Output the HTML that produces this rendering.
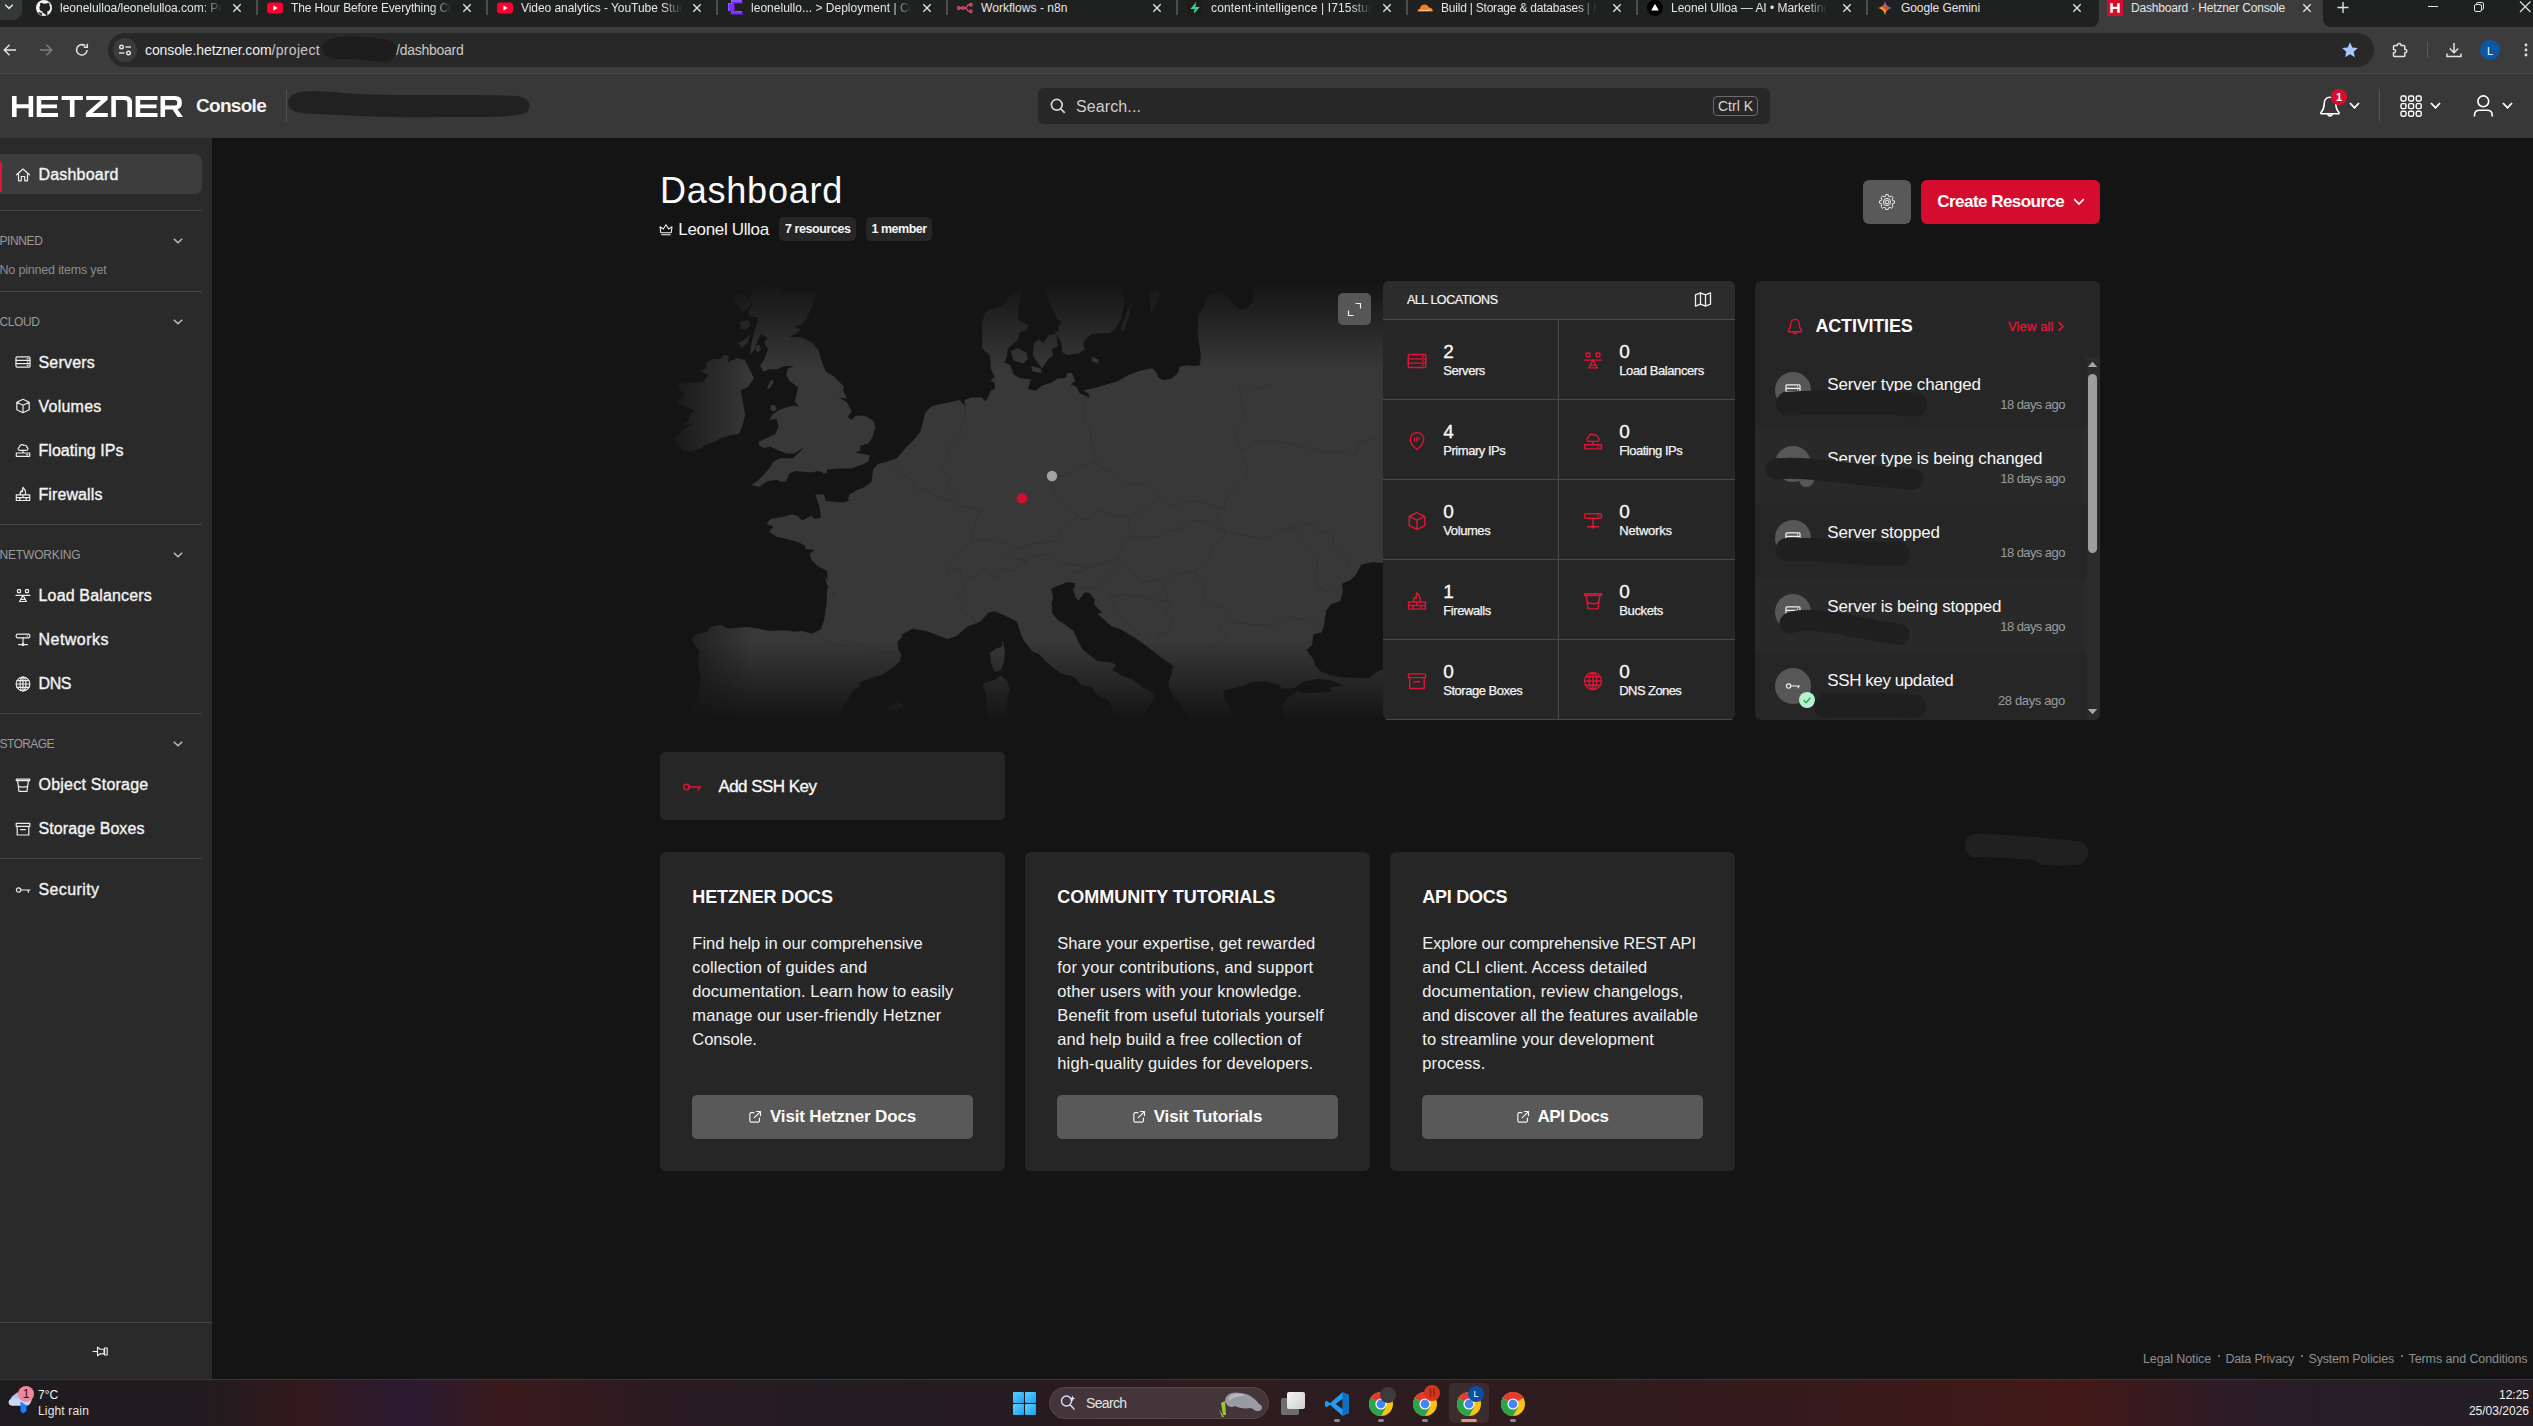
<!DOCTYPE html>
<html><head><meta charset="utf-8"><title>Dashboard · Hetzner Console</title>
<style>
html,body{margin:0;padding:0;}
body{width:2533px;height:1426px;overflow:hidden;position:relative;background:#141414;font-family:"Liberation Sans",sans-serif;}
#r{position:absolute;left:0;top:0;width:2533px;height:1426px;overflow:hidden;}
#r div,#r span,#r svg{position:absolute;}
#r span{display:block;}

</style></head><body><div id="r">
<div style="left:0px;top:0px;width:2533px;height:27px;background:#1f2020;border-radius:0px;"></div>
<div style="left:0px;top:0px;width:22px;height:20px;background:#363737;border-radius:0px;border-bottom-right-radius:9px;"></div>
<svg style="left:3px;top:2px" width="12" height="10" viewBox="0 0 12 10"><path d="M2.200 2.800L6 6.400L9.800 2.800" stroke="#e3e3e3" stroke-width="1.5" fill="none"/></svg>
<div style="left:2099px;top:0px;width:224px;height:27px;background:#3c3c3c;border-radius:0px;border-radius:0;"></div>
<div style="left:2091px;top:19px;width:8px;height:8px;background:#3c3c3c;border-radius:0px;"></div>
<div style="left:2091px;top:19px;width:8px;height:8px;background:#1f2020;border-radius:0px;border-bottom-right-radius:8px;"></div>
<div style="left:2323px;top:19px;width:8px;height:8px;background:#3c3c3c;border-radius:0px;"></div>
<div style="left:2323px;top:19px;width:8px;height:8px;background:#1f2020;border-radius:0px;border-bottom-left-radius:8px;"></div>
<svg style="left:36px;top:0px" width="16" height="16" viewBox="0 0 16 16"><circle cx="8" cy="8" r="8" fill="#f3f3f3"/><path d="M5.2 15.3c0-.6 0-1.3 0-2-1.8.4-2.5-.9-2.5-.9M10.8 15.4v-2.6c0-.8-.2-1.3-.6-1.6 1.9-.2 3.4-.9 3.4-3.6 0-.8-.3-1.5-.8-2 .1-.3.4-1.1-.1-2.1 0 0-.7-.2-2.1.8a7 7 0 0 0-3.6 0C5.600 3.300 4.900 3.500 4.900 3.500c-.5 1-.2 1.800-.1 2.100-.5.5-.8 1.200-.8 2 0 2.700 1.500 3.400 3.400 3.600-.3.300-.5.700-.6 1.300" fill="#1f2020" stroke="#1f2020" stroke-width="1.2"/></svg>
<span id="t0" style="font-size:12px;line-height:16px;color:#e6e6e6;top:-0.50px;white-space:pre;letter-spacing:-0.015px;left:60px;-webkit-mask-image:linear-gradient(90deg,#000 0,#000 86%,transparent 98%);mask-image:linear-gradient(90deg,#000 0,#000 86%,transparent 98%);">leonelulloa/leonelulloa.com: Pe</span>
<svg style="left:231px;top:1.5px" width="12" height="12" viewBox="-6 -6 12 12"><path d="M-3.7 -3.7L3.7 3.7M3.7 -3.7L-3.7 3.7" stroke="#e3e3e3" stroke-width="1.35" fill="none"/></svg>
<div style="left:256px;top:0px;width:1.5px;height:14.5px;background:#4d4d4d;border-radius:0px;"></div>
<svg style="left:267px;top:0px" width="16" height="16" viewBox="0 0 16 16"><rect x="0" y="2.5" width="16" height="11" rx="3" fill="#ff0033"/><path d="M6.400 5.600L10.600 8L6.400 10.400Z" fill="#fff"/></svg>
<span id="t1" style="font-size:12px;line-height:16px;color:#e6e6e6;top:-0.50px;white-space:pre;letter-spacing:-0.135px;left:291px;-webkit-mask-image:linear-gradient(90deg,#000 0,#000 86%,transparent 98%);mask-image:linear-gradient(90deg,#000 0,#000 86%,transparent 98%);">The Hour Before Everything Ch</span>
<svg style="left:461px;top:1.5px" width="12" height="12" viewBox="-6 -6 12 12"><path d="M-3.7 -3.7L3.7 3.7M3.7 -3.7L-3.7 3.7" stroke="#e3e3e3" stroke-width="1.35" fill="none"/></svg>
<div style="left:486px;top:0px;width:1.5px;height:14.5px;background:#4d4d4d;border-radius:0px;"></div>
<svg style="left:497px;top:0px" width="16" height="16" viewBox="0 0 16 16"><rect x="0" y="2.5" width="16" height="11" rx="3" fill="#ff0033"/><path d="M6.400 5.600L10.600 8L6.400 10.400Z" fill="#fff"/></svg>
<span id="t2" style="font-size:12px;line-height:16px;color:#e6e6e6;top:-0.50px;white-space:pre;letter-spacing:-0.054px;left:521px;-webkit-mask-image:linear-gradient(90deg,#000 0,#000 86%,transparent 98%);mask-image:linear-gradient(90deg,#000 0,#000 86%,transparent 98%);">Video analytics - YouTube Stud</span>
<svg style="left:691px;top:1.5px" width="12" height="12" viewBox="-6 -6 12 12"><path d="M-3.7 -3.7L3.7 3.7M3.7 -3.7L-3.7 3.7" stroke="#e3e3e3" stroke-width="1.35" fill="none"/></svg>
<div style="left:716px;top:0px;width:1.5px;height:14.5px;background:#4d4d4d;border-radius:0px;"></div>
<svg style="left:727px;top:0px" width="16" height="16" viewBox="0 0 16 16"><path d="M4 0H15V3H7V11H15V14H4V11H1V3H4Z" fill="#8c52ff"/><path d="M5 2H16V4H8V12H16V15H5V12H2V4H5Z" fill="#6b16ed" opacity=".55"/></svg>
<span id="t3" style="font-size:12px;line-height:16px;color:#e6e6e6;top:-0.50px;white-space:pre;letter-spacing:0.024px;left:751px;-webkit-mask-image:linear-gradient(90deg,#000 0,#000 86%,transparent 98%);mask-image:linear-gradient(90deg,#000 0,#000 86%,transparent 98%);">leonelullo... &gt; Deployment | Co</span>
<svg style="left:921px;top:1.5px" width="12" height="12" viewBox="-6 -6 12 12"><path d="M-3.7 -3.7L3.7 3.7M3.7 -3.7L-3.7 3.7" stroke="#e3e3e3" stroke-width="1.35" fill="none"/></svg>
<div style="left:946px;top:0px;width:1.5px;height:14.5px;background:#4d4d4d;border-radius:0px;"></div>
<svg style="left:957px;top:0px" width="16" height="16" viewBox="0 0 16 16" fill="none" stroke="#ea4b71" stroke-width="1.3"><circle cx="1.800" cy="8" r="1.300"/><circle cx="6" cy="8" r="1.300"/><circle cx="13.800" cy="4.800" r="1.300"/><circle cx="13.800" cy="11.200" r="1.300"/><path d="M3.100 8H4.700M7.300 8H8.500C10 8 9.800 4.800 11.300 4.800H12.500M8.500 8C10 8 9.800 11.200 11.300 11.200H12.500"/></svg>
<span id="t4" style="font-size:12px;line-height:16px;color:#e6e6e6;top:-0.50px;white-space:pre;letter-spacing:0.046px;left:981px;">Workflows - n8n</span>
<svg style="left:1151px;top:1.5px" width="12" height="12" viewBox="-6 -6 12 12"><path d="M-3.7 -3.7L3.7 3.7M3.7 -3.7L-3.7 3.7" stroke="#e3e3e3" stroke-width="1.35" fill="none"/></svg>
<div style="left:1176px;top:0px;width:1.5px;height:14.5px;background:#4d4d4d;border-radius:0px;"></div>
<svg style="left:1187px;top:0px" width="16" height="16" viewBox="0 0 16 16"><rect width="16" height="16" rx="2" fill="#1c1c1c"/><path d="M9.200 2L3.300 9H7.600L6.800 14L12.700 7H8.400Z" fill="#3ecf8e"/></svg>
<span id="t5" style="font-size:12px;line-height:16px;color:#e6e6e6;top:-0.50px;white-space:pre;letter-spacing:0.154px;left:1211px;-webkit-mask-image:linear-gradient(90deg,#000 0,#000 86%,transparent 98%);mask-image:linear-gradient(90deg,#000 0,#000 86%,transparent 98%);">content-intelligence | I715stud</span>
<svg style="left:1381px;top:1.5px" width="12" height="12" viewBox="-6 -6 12 12"><path d="M-3.7 -3.7L3.7 3.7M3.7 -3.7L-3.7 3.7" stroke="#e3e3e3" stroke-width="1.35" fill="none"/></svg>
<div style="left:1406px;top:0px;width:1.5px;height:14.5px;background:#4d4d4d;border-radius:0px;"></div>
<svg style="left:1417px;top:0px" width="16" height="16" viewBox="0 0 16 16"><path d="M0.500 11.500C0.300 9.800 1.500 8.700 2.900 8.700C3.100 6.300 5.200 4.500 7.500 4.500C9.600 4.500 11.200 5.800 11.800 7.600C14 7.500 15.800 9.200 15.800 11.500Z" fill="#f6821f"/><path d="M10.500 9.300L14.800 9.300L15.500 10.400L10.500 10.400Z" fill="#fbad41"/><path d="M3 10.200H11.500V10.900H3Z" fill="#fff" opacity=".85"/></svg>
<span id="t6" style="font-size:12px;line-height:16px;color:#e6e6e6;top:-0.50px;white-space:pre;letter-spacing:-0.215px;left:1441px;-webkit-mask-image:linear-gradient(90deg,#000 0,#000 86%,transparent 98%);mask-image:linear-gradient(90deg,#000 0,#000 86%,transparent 98%);">Build | Storage &amp; databases | F</span>
<svg style="left:1611px;top:1.5px" width="12" height="12" viewBox="-6 -6 12 12"><path d="M-3.7 -3.7L3.7 3.7M3.7 -3.7L-3.7 3.7" stroke="#e3e3e3" stroke-width="1.35" fill="none"/></svg>
<div style="left:1636px;top:0px;width:1.5px;height:14.5px;background:#4d4d4d;border-radius:0px;"></div>
<svg style="left:1647px;top:0px" width="16" height="16" viewBox="0 0 16 16"><circle cx="8" cy="8" r="8" fill="#000"/><path d="M8 3.800L11.800 10.600H4.200Z" fill="#fff"/></svg>
<span id="t7" style="font-size:12px;line-height:16px;color:#e6e6e6;top:-0.50px;white-space:pre;letter-spacing:-0.022px;left:1671px;-webkit-mask-image:linear-gradient(90deg,#000 0,#000 86%,transparent 98%);mask-image:linear-gradient(90deg,#000 0,#000 86%,transparent 98%);">Leonel Ulloa — AI • Marketing</span>
<svg style="left:1841px;top:1.5px" width="12" height="12" viewBox="-6 -6 12 12"><path d="M-3.7 -3.7L3.7 3.7M3.7 -3.7L-3.7 3.7" stroke="#e3e3e3" stroke-width="1.35" fill="none"/></svg>
<div style="left:1866px;top:0px;width:1.5px;height:14.5px;background:#4d4d4d;border-radius:0px;"></div>
<svg style="left:1877px;top:0px" width="16" height="16" viewBox="0 0 16 16"><defs><linearGradient id="gm" x1="0" y1="1" x2="1" y2="0"><stop offset="0" stop-color="#34a853"/><stop offset=".35" stop-color="#fbbc04"/><stop offset=".5" stop-color="#ea4335"/><stop offset=".75" stop-color="#4285f4"/><stop offset="1" stop-color="#4285f4"/></linearGradient></defs><path d="M8 0.500C8.400 4.800 11.200 7.600 15.500 8C11.200 8.400 8.400 11.200 8 15.500C7.600 11.200 4.800 8.400 0.500 8C4.800 7.600 7.600 4.800 8 0.500Z" fill="url(#gm)"/></svg>
<span id="t8" style="font-size:12px;line-height:16px;color:#e6e6e6;top:-0.50px;white-space:pre;letter-spacing:-0.081px;left:1901px;">Google Gemini</span>
<svg style="left:2071px;top:1.5px" width="12" height="12" viewBox="-6 -6 12 12"><path d="M-3.7 -3.7L3.7 3.7M3.7 -3.7L-3.7 3.7" stroke="#e3e3e3" stroke-width="1.35" fill="none"/></svg>
<svg style="left:2107px;top:0px" width="16" height="16" viewBox="0 0 16 16"><rect width="16" height="16" fill="#d50c2d"/><path d="M3.300 3.200H5.800V6.700H10.200V3.200H12.700V12.800H10.200V9.100H5.800V12.800H3.300Z" fill="#fff"/></svg>
<span id="t9" style="font-size:12px;line-height:16px;color:#e6e6e6;top:-0.50px;white-space:pre;letter-spacing:-0.176px;left:2131px;">Dashboard · Hetzner Console</span>
<svg style="left:2301px;top:1.5px" width="12" height="12" viewBox="-6 -6 12 12"><path d="M-3.7 -3.7L3.7 3.7M3.7 -3.7L-3.7 3.7" stroke="#e3e3e3" stroke-width="1.35" fill="none"/></svg>
<svg style="left:2337px;top:1px" width="12" height="13" viewBox="0 0 12 13"><path d="M6 1V12M0.500 6.500H11.500" stroke="#e3e3e3" stroke-width="1.4"/></svg>
<div style="left:2428px;top:6px;width:10px;height:1px;background:#e6e6e6;border-radius:0px;"></div>
<svg style="left:2473px;top:1px" width="12" height="12" viewBox="0 0 12 12" fill="none" stroke="#e6e6e6" stroke-width="1"><rect x="1.500" y="3.500" width="7" height="7" rx="1.500"/><path d="M3.500 3.500V2.800Q3.500 1.500 4.800 1.500H9.200Q10.500 1.500 10.500 2.800V7.200Q10.500 8.500 9.200 8.500H8.500"/></svg>
<svg style="left:2519px;top:1px" width="14" height="12" viewBox="0 0 14 12"><path d="M1 0.500L11.500 11M11.500 0.500L1 11" stroke="#e6e6e6" stroke-width="1.100" fill="none"/></svg>
<div style="left:0px;top:27px;width:2533px;height:47px;background:#3c3c3c;border-radius:0px;"></div>
<div style="left:0px;top:73px;width:2533px;height:1px;background:#474747;border-radius:0px;"></div>
<div style="left:108px;top:33px;width:2266px;height:34px;background:#282828;border-radius:17px;"></div>
<svg style="left:2px;top:42px" width="16" height="16" viewBox="0 0 16 16" fill="none" stroke="#e3e3e3" stroke-width="1.500"><path d="M14 8H2.500M7.500 2.800L2.300 8L7.500 13.200"/></svg>
<svg style="left:38px;top:42px" width="16" height="16" viewBox="0 0 16 16" fill="none" stroke="#7d7d7d" stroke-width="1.500"><path d="M2 8H13.500M8.500 2.800L13.700 8L8.500 13.200"/></svg>
<svg style="left:74px;top:42px" width="16" height="16" viewBox="0 0 16 16" fill="none" stroke="#e3e3e3" stroke-width="1.500"><path d="M13 8A5.200 5.200 0 1 1 11.200 3.900"/><path d="M13.300 1.800V5.300H9.800" /></svg>
<svg style="left:113px;top:38px" width="24" height="24" viewBox="0 0 24 24"><circle cx="12" cy="12" r="12" fill="#3b3b3b"/><g fill="none" stroke="#e3e3e3" stroke-width="1.400"><circle cx="8.500" cy="9" r="1.800"/><path d="M12.500 9H18"/><circle cx="15.500" cy="15" r="1.800"/><path d="M6 15H11.500"/></g></svg>
<span id="t10" style="font-size:14px;line-height:18px;color:#efefef;top:41.00px;white-space:pre;letter-spacing:-0.100px;left:145px;">console.hetzner.com</span>
<span id="t11" style="font-size:14px;line-height:18px;color:#c9c9c9;top:41.00px;white-space:pre;letter-spacing:0.322px;left:271.5px;">/project</span>
<span id="t12" style="font-size:14px;line-height:18px;color:#c9c9c9;top:41.00px;white-space:pre;letter-spacing:-0.256px;left:396px;">/dashboard</span>
<svg style="left:318px;top:34px" width="84" height="32" viewBox="0 0 84 32"><path d="M6 9C14 2 30 1 44 3C58 3 74 5 78 11C80 17 78 24 72 27C60 29 46 26 34 25C22 26 8 25 5 19C3 15 3 12 6 9Z" fill="#1d1d1d"/></svg>
<svg style="left:2341px;top:41px" width="18" height="18" viewBox="0 0 18 18"><path d="M9 1.300L11.300 6.500L16.900 7L12.700 10.700L13.900 16.200L9 13.300L4.100 16.200L5.300 10.700L1.100 7L6.700 6.500Z" fill="#a8c7fa"/></svg>
<svg style="left:2391px;top:41px" width="18" height="18" viewBox="0 0 18 18" fill="none" stroke="#e3e3e3" stroke-width="1.500" stroke-linejoin="round"><path d="M2.500 5.800Q2.500 4.600 3.700 4.600H6.400V4.200A1.800 1.800 0 0 1 10 4.200V4.600H12.600Q13.800 4.600 13.800 5.800V8.400H14.200A1.700 1.700 0 0 1 14.200 11.800H13.800V14.400Q13.800 15.600 12.600 15.600H3.700Q2.500 15.600 2.500 14.400V11.800H2.900A1.700 1.700 0 0 0 2.900 8.400H2.500Z"/></svg>
<div style="left:2427px;top:42px;width:1px;height:16px;background:#5a5a5a;border-radius:0px;"></div>
<svg style="left:2445px;top:41px" width="18" height="18" viewBox="0 0 18 18" fill="none" stroke="#e3e3e3" stroke-width="1.500"><path d="M9 2V11.500M4.800 7.500L9 11.700L13.200 7.500M2 12.500V15.500H16V12.500"/></svg>
<svg style="left:2480px;top:40px" width="20" height="20" viewBox="0 0 20 20"><circle cx="10" cy="10" r="10" fill="#0a57a8"/></svg>
<span id="t13" style="font-size:11px;line-height:14px;color:#ffffff;top:43.50px;white-space:pre;left:2490px;transform:translateX(-50%);">L</span>
<svg style="left:2524px;top:43px" width="4" height="4" viewBox="0 0 4 4"><circle cx="2" cy="2" r="1.400" fill="#e3e3e3"/></svg>
<svg style="left:2524px;top:48px" width="4" height="4" viewBox="0 0 4 4"><circle cx="2" cy="2" r="1.400" fill="#e3e3e3"/></svg>
<svg style="left:2524px;top:53px" width="4" height="4" viewBox="0 0 4 4"><circle cx="2" cy="2" r="1.400" fill="#e3e3e3"/></svg>
<div style="left:0px;top:74px;width:2533px;height:64px;background:#383838;border-radius:0px;"></div>
<svg style="left:12px;top:96px" width="171" height="21" viewBox="0 0 171 21" fill="#fff">
<path d="M0 0H4.600V8.200H16.600V0H21.200V21H16.600V12.200H4.600V21H0Z"/>
<path d="M24.700 0H46V4H29.300V8.400H45V12.200H29.300V17H46V21H24.700Z"/>
<path d="M49.600 0H70.900V4H62.500V21H57.900V4H49.600Z"/>
<path d="M74.200 0H95.600V3.800L80.500 17H95.800V21H73.900V17.200L89 4H74.200Z"/>
<path d="M99.300 21V0H113.500Q120 0 120 6.500V21H115.400V7.200Q115.400 4 112.200 4H103.900V21Z"/>
<path d="M123.600 0H145.500V4H128.200V8.400H144.500V12.200H128.200V17H145.500V21H123.600Z"/>
<path d="M148.500 0H163Q169.800 0 169.800 6V7.600Q169.800 12.400 165.500 13.200L171 21H165.600L160.600 13.500H153.100V21H148.500ZM153.100 4V9.600H162.600Q165.200 9.600 165.200 7.400V6.200Q165.200 4 162.600 4Z"/>
</svg>
<span id="t14" style="font-size:19px;line-height:24px;color:#f2f2f2;top:93.50px;white-space:pre;font-weight:700;letter-spacing:-0.708px;left:196px;">Console</span>
<div style="left:286px;top:90px;width:1px;height:32px;background:#525252;border-radius:0px;"></div>
<svg style="left:286px;top:88px" width="248" height="32" viewBox="0 0 248 32"><path d="M5 8C12 1 40 3 70 6C120 8 190 6 232 8C242 10 246 16 242 23C236 30 200 29 150 29C110 30 70 28 30 26C10 26 2 22 2 15C2 12 3 10 5 8Z" fill="#212121"/></svg>
<div style="left:1038px;top:88px;width:732px;height:36px;background:#272727;border-radius:6px;"></div>
<svg style="left:1049px;top:97px" width="18" height="18" viewBox="0 0 18 18" fill="none" stroke="#d4d4d4" stroke-width="1.700"><circle cx="7.800" cy="7.800" r="5.400"/><path d="M11.800 11.800L15.800 15.800"/></svg>
<span id="t15" style="font-size:16px;line-height:20px;color:#cfcfcf;top:97.00px;white-space:pre;letter-spacing:0.108px;left:1076px;">Search...</span>
<div style="left:1713px;top:96px;width:45px;height:20px;background:transparent;border-radius:4px;border:1px solid #6b6b6b;box-sizing:border-box;"></div>
<span id="t16" style="font-size:14px;line-height:18px;color:#d6d6d6;top:97.00px;white-space:pre;left:1735.5px;transform:translateX(-50%);">Ctrl K</span>
<svg style="left:2318px;top:95px" width="24" height="25" viewBox="0 0 24 25" fill="none" stroke="#fff" stroke-width="1.600" stroke-linejoin="round" stroke-linecap="round"><path d="M12 2.200C8 2.200 6.200 5.400 6.200 8.800C6.200 13 4.800 15.500 3 17.500C2.600 18.100 2.900 18.800 3.700 18.800H20.300C21.100 18.800 21.400 18.100 21 17.500C19.200 15.500 17.800 13 17.800 8.800C17.800 5.400 16 2.200 12 2.200Z"/><path d="M9.800 19.200A2.300 2.300 0 0 0 14.200 19.200"/></svg>
<svg style="left:2330px;top:88px" width="18" height="18" viewBox="0 0 18 18"><circle cx="9" cy="9" r="8.200" fill="#d50c2d"/></svg>
<span id="t17" style="font-size:11px;line-height:14px;color:#fff;top:90.30px;white-space:pre;font-weight:700;left:2339px;transform:translateX(-50%);">1</span>
<svg style="left:2349px;top:102px" width="11" height="7" viewBox="0 0 11 7"><path d="M1 1L5.5 5.8L10 1" stroke="#fff" stroke-width="1.8" fill="none"/></svg>
<svg style="left:2429.5px;top:102px" width="11" height="7" viewBox="0 0 11 7"><path d="M1 1L5.5 5.8L10 1" stroke="#fff" stroke-width="1.8" fill="none"/></svg>
<svg style="left:2501.5px;top:102px" width="11" height="7" viewBox="0 0 11 7"><path d="M1 1L5.5 5.8L10 1" stroke="#fff" stroke-width="1.8" fill="none"/></svg>
<div style="left:2379px;top:89px;width:1px;height:32px;background:#555;border-radius:0px;"></div>
<svg style="left:2400px;top:95px" width="23" height="23" viewBox="0 0 23 23" fill="none" stroke="#fff" stroke-width="1.400"><rect x="1.0" y="1.0" width="5" height="5" rx="1.400"/><rect x="1.0" y="8.6" width="5" height="5" rx="1.400"/><rect x="1.0" y="16.2" width="5" height="5" rx="1.400"/><rect x="8.6" y="1.0" width="5" height="5" rx="1.400"/><rect x="8.6" y="8.6" width="5" height="5" rx="1.400"/><rect x="8.6" y="16.2" width="5" height="5" rx="1.400"/><rect x="16.2" y="1.0" width="5" height="5" rx="1.400"/><rect x="16.2" y="8.6" width="5" height="5" rx="1.400"/><rect x="16.2" y="16.2" width="5" height="5" rx="1.400"/></svg>
<svg style="left:2472px;top:94px" width="23" height="24" viewBox="0 0 23 24" fill="none" stroke="#fff" stroke-width="1.600"><circle cx="11.300" cy="7.300" r="5.400"/><path d="M2.500 22.500V21Q2.500 16.200 7.500 16.200H15.200Q20.200 16.200 20.200 21V22.500"/></svg>
<div style="left:0px;top:138px;width:212px;height:1242px;background:#2a2a2a;border-radius:0px;"></div>
<div style="left:0px;top:154px;width:202px;height:40px;background:#3d3d3d;border-radius:0px;border-radius:0 7px 7px 0;"></div>
<div style="left:0px;top:162px;width:2px;height:30px;background:#e01535;border-radius:0px;"></div>
<div style="left:0px;top:210px;width:202px;height:1px;background:#454545;border-radius:0px;"></div>
<div style="left:0px;top:291px;width:202px;height:1px;background:#454545;border-radius:0px;"></div>
<div style="left:0px;top:524px;width:202px;height:1px;background:#454545;border-radius:0px;"></div>
<div style="left:0px;top:713px;width:202px;height:1px;background:#454545;border-radius:0px;"></div>
<div style="left:0px;top:858px;width:202px;height:1px;background:#454545;border-radius:0px;"></div>
<div style="left:0px;top:1322px;width:212px;height:1px;background:#454545;border-radius:0px;"></div>
<svg style="left:15px;top:166.5px" width="16" height="16" viewBox="0 0 16 16" fill="none" stroke="#ececec" stroke-width="1.200" stroke-linejoin="round" stroke-linecap="round"><path d="M1.500 7.800L8 2L14.500 7.800M3.500 6.500V13.800H6.300V9.500H9.700V13.800H12.500V6.500"/></svg>
<span id="t18" style="font-size:16px;line-height:22px;color:#f4f4f4;top:164.30px;white-space:pre;-webkit-text-stroke:0.35px #f4f4f4;letter-spacing:0.191px;left:38.5px;">Dashboard</span>
<svg style="left:15px;top:354px" width="16" height="16" viewBox="0 0 16 16" fill="none" stroke="#ececec" stroke-width="1.200" stroke-linejoin="round" stroke-linecap="round"><rect x="1" y="2.800" width="14" height="10.400" rx="1"/><path d="M1 6.300H15M1 9.700H15M12.300 4.600H13M12.300 8H13M12.300 11.400H13"/></svg>
<span id="t19" style="font-size:16px;line-height:22px;color:#f4f4f4;top:351.80px;white-space:pre;-webkit-text-stroke:0.35px #f4f4f4;letter-spacing:0.196px;left:38.5px;">Servers</span>
<svg style="left:15px;top:398px" width="16" height="16" viewBox="0 0 16 16" fill="none" stroke="#ececec" stroke-width="1.200" stroke-linejoin="round" stroke-linecap="round"><path d="M8 1.300L14.200 4.300V11.700L8 14.700L1.800 11.700V4.300ZM1.800 4.300L8 7.300L14.200 4.300M8 7.300V14.700"/></svg>
<span id="t20" style="font-size:16px;line-height:22px;color:#f4f4f4;top:395.80px;white-space:pre;-webkit-text-stroke:0.35px #f4f4f4;letter-spacing:0.232px;left:38.5px;">Volumes</span>
<svg style="left:15px;top:442px" width="16" height="16" viewBox="0 0 16 16" fill="none" stroke="#ececec" stroke-width="1.200" stroke-linejoin="round" stroke-linecap="round"><path d="M4.800 8.300C2.800 8.300 2.300 5.800 4.300 5.200C4.500 2.800 7.300 1.800 8.900 3.500C10.300 2.800 12 3.800 11.800 5.300C13.600 5.800 13.200 8.300 11.400 8.300ZM8 8.300V11M1.300 11H14.700V14.300H1.300ZM11.800 12.700H12.600"/></svg>
<span id="t21" style="font-size:16px;line-height:22px;color:#f4f4f4;top:439.80px;white-space:pre;-webkit-text-stroke:0.35px #f4f4f4;letter-spacing:0.043px;left:38.5px;">Floating IPs</span>
<svg style="left:15px;top:486px" width="16" height="16" viewBox="0 0 16 16" fill="none" stroke="#ececec" stroke-width="1.200" stroke-linejoin="round" stroke-linecap="round"><path d="M1.300 8.800H14.700V14.500H1.300ZM1.300 11.600H14.700M8 8.800V11.600M4.800 11.600V14.500M11.200 11.600V14.500M5.600 8.600C4.600 6.800 5.800 5.400 6.600 4.800C6.600 5.800 7.200 6.200 7.400 5.800C7.800 4.800 7.200 3 7.900 1.400C9 2.800 10.800 4.200 10.600 6.400C10.600 7.400 10.300 8 10 8.600"/></svg>
<span id="t22" style="font-size:16px;line-height:22px;color:#f4f4f4;top:483.80px;white-space:pre;-webkit-text-stroke:0.35px #f4f4f4;letter-spacing:0.097px;left:38.5px;">Firewalls</span>
<svg style="left:15px;top:587.5px" width="16" height="16" viewBox="0 0 16 16" fill="none" stroke="#ececec" stroke-width="1.200" stroke-linejoin="round" stroke-linecap="round"><rect x="2.500" y="1.600" width="3" height="3" rx=".6"/><rect x="10.500" y="1.600" width="3" height="3" rx=".6"/><path d="M1 7.300H15M8 7.300L4.600 13.500H11.400ZM5.500 11.300H10.500"/></svg>
<span id="t23" style="font-size:16px;line-height:22px;color:#f4f4f4;top:585.30px;white-space:pre;-webkit-text-stroke:0.35px #f4f4f4;letter-spacing:0.165px;left:38.5px;">Load Balancers</span>
<svg style="left:15px;top:631.5px" width="16" height="16" viewBox="0 0 16 16" fill="none" stroke="#ececec" stroke-width="1.200" stroke-linejoin="round" stroke-linecap="round"><rect x="1.200" y="2.200" width="13.600" height="3.600" rx="1.200"/><path d="M8 5.800V12.800M3.500 12.600H12.500M12 4H12.600"/><circle cx="8" cy="12.600" r=".9" fill="#ececec"/></svg>
<span id="t24" style="font-size:16px;line-height:22px;color:#f4f4f4;top:629.30px;white-space:pre;-webkit-text-stroke:0.35px #f4f4f4;letter-spacing:0.477px;left:38.5px;">Networks</span>
<svg style="left:15px;top:675.5px" width="16" height="16" viewBox="0 0 16 16" fill="none" stroke="#ececec" stroke-width="1.200" stroke-linejoin="round" stroke-linecap="round"><circle cx="8" cy="8" r="6.800"/><ellipse cx="8" cy="8" rx="3" ry="6.800"/><path d="M8 1.200V14.800M1.200 8H14.800M2.200 4.600H13.800M2.200 11.400H13.800"/></svg>
<span id="t25" style="font-size:16px;line-height:22px;color:#f4f4f4;top:673.30px;white-space:pre;-webkit-text-stroke:0.35px #f4f4f4;letter-spacing:-0.427px;left:38.5px;">DNS</span>
<svg style="left:15px;top:776.5px" width="16" height="16" viewBox="0 0 16 16" fill="none" stroke="#ececec" stroke-width="1.200" stroke-linejoin="round" stroke-linecap="round"><path d="M1.300 2.200H14.700V3.600H1.300ZM2.600 3.800L4 14.300H12L13.400 3.800M3.300 8.800C5 10.600 11 10.600 12.700 8.800"/></svg>
<span id="t26" style="font-size:16px;line-height:22px;color:#f4f4f4;top:774.30px;white-space:pre;-webkit-text-stroke:0.35px #f4f4f4;letter-spacing:0.233px;left:38.5px;">Object Storage</span>
<svg style="left:15px;top:820.5px" width="16" height="16" viewBox="0 0 16 16" fill="none" stroke="#ececec" stroke-width="1.200" stroke-linejoin="round" stroke-linecap="round"><path d="M1.200 2.300H14.800V5.300H1.200ZM2.200 5.300V14H13.800V5.300M5.600 8.600H10.400"/></svg>
<span id="t27" style="font-size:16px;line-height:22px;color:#f4f4f4;top:818.30px;white-space:pre;-webkit-text-stroke:0.35px #f4f4f4;letter-spacing:0.081px;left:38.5px;">Storage Boxes</span>
<svg style="left:15px;top:881.5px" width="16" height="16" viewBox="0 0 16 16" fill="none" stroke="#ececec" stroke-width="1.200" stroke-linejoin="round" stroke-linecap="round"><circle cx="3.600" cy="8" r="2.200"/><path d="M5.800 8H15M13.300 8V10.300"/></svg>
<span id="t28" style="font-size:16px;line-height:22px;color:#f4f4f4;top:879.30px;white-space:pre;-webkit-text-stroke:0.35px #f4f4f4;letter-spacing:0.400px;left:38.5px;">Security</span>
<span id="t29" style="font-size:12px;line-height:16px;color:#9b9b9b;top:232.50px;white-space:pre;letter-spacing:-0.391px;left:-0.5px;">PINNED</span>
<svg style="left:172px;top:236.5px" width="12" height="8" viewBox="0 0 12 8"><path d="M1.800 1.800L6 5.800L10.200 1.800" stroke="#bdbdbd" stroke-width="1.500" fill="none"/></svg>
<span id="t30" style="font-size:12px;line-height:16px;color:#9b9b9b;top:313.50px;white-space:pre;letter-spacing:-0.403px;left:-0.5px;">CLOUD</span>
<svg style="left:172px;top:317.5px" width="12" height="8" viewBox="0 0 12 8"><path d="M1.800 1.800L6 5.800L10.200 1.800" stroke="#bdbdbd" stroke-width="1.500" fill="none"/></svg>
<span id="t31" style="font-size:12px;line-height:16px;color:#9b9b9b;top:546.50px;white-space:pre;letter-spacing:-0.167px;left:-0.5px;">NETWORKING</span>
<svg style="left:172px;top:550.5px" width="12" height="8" viewBox="0 0 12 8"><path d="M1.800 1.800L6 5.800L10.200 1.800" stroke="#bdbdbd" stroke-width="1.500" fill="none"/></svg>
<span id="t32" style="font-size:12px;line-height:16px;color:#9b9b9b;top:735.50px;white-space:pre;letter-spacing:-0.567px;left:-0.5px;">STORAGE</span>
<svg style="left:172px;top:739.5px" width="12" height="8" viewBox="0 0 12 8"><path d="M1.800 1.800L6 5.800L10.200 1.800" stroke="#bdbdbd" stroke-width="1.500" fill="none"/></svg>
<span id="t33" style="font-size:12.5px;line-height:16px;color:#8c8c8c;top:261.50px;white-space:pre;letter-spacing:-0.183px;left:-0.5px;">No pinned items yet</span>
<svg style="left:92px;top:1344.500px" width="17" height="13" viewBox="0 0 17 13" fill="none" stroke="#ececec" stroke-width="1.150" stroke-linejoin="round"><path d="M0.500 6.500H5.500M5.500 2.200V10.800L8.200 8.800H12V4.200H8.200ZM12.600 3H15.200V10H12.600Z"/></svg>
<span id="t34" style="font-size:36px;line-height:44px;color:#fafafa;top:168.50px;white-space:pre;letter-spacing:0.764px;left:660px;">Dashboard</span>
<svg style="left:659px;top:223px" width="14" height="13" viewBox="0 0 14 13" fill="none" stroke="#f2f2f2" stroke-width="1.100" stroke-linejoin="round"><path d="M1.800 9.800L1 3.800L4.300 6L7 1.800L9.700 6L13 3.800L12.200 9.800ZM2.300 11.800H11.700"/></svg>
<span id="t35" style="font-size:17px;line-height:22px;color:#f5f5f5;top:219.10px;white-space:pre;letter-spacing:-0.335px;left:678.3px;">Leonel Ulloa</span>
<div style="left:779px;top:217px;width:77px;height:24px;background:#262626;border-radius:5px;"></div>
<span id="t36" style="font-size:12.5px;line-height:16px;color:#f5f5f5;top:221.00px;white-space:pre;font-weight:700;letter-spacing:-0.426px;left:785px;">7 resources</span>
<div style="left:866px;top:217px;width:66px;height:24px;background:#262626;border-radius:5px;"></div>
<span id="t37" style="font-size:12.5px;line-height:16px;color:#f5f5f5;top:221.00px;white-space:pre;font-weight:700;letter-spacing:-0.508px;left:871.6px;">1 member</span>
<div style="left:1863px;top:180px;width:48px;height:44px;background:#595959;border-radius:6px;"></div>
<svg style="left:1877px;top:192px" width="20" height="20" viewBox="0 0 24 24" fill="none" stroke="#f0f0f0" stroke-width="1.200" stroke-linejoin="round"><circle cx="12" cy="12" r="2.200"/><circle cx="12" cy="12" r="4.300"/><path d="M10.600 3.200h2.800l.5 2.100 1.500.6 1.900-1.100 2 2-1.100 1.900.6 1.500 2.100.5v2.800l-2.100.5-.6 1.500 1.100 1.900-2 2-1.900-1.100-1.500.6-.5 2.100h-2.800l-.5-2.100-1.500-.6-1.900 1.100-2-2 1.100-1.900-.6-1.500-2.100-.5v-2.800l2.100-.5.6-1.500-1.100-1.900 2-2 1.900 1.100 1.500-.6z"/></svg>
<div style="left:1921px;top:180px;width:179px;height:44px;background:#d50c2d;border-radius:6px;"></div>
<span id="t38" style="font-size:17px;line-height:22px;color:#fff;top:190.90px;white-space:pre;font-weight:700;letter-spacing:-0.542px;left:1937.3px;">Create Resource</span>
<svg style="left:2073px;top:197.500px" width="12" height="8" viewBox="0 0 12 8"><path d="M1.200 1.200L6 6L10.800 1.200" stroke="#fff" stroke-width="1.700" fill="none"/></svg>
<svg style="left:660px;top:282px" width="723" height="438" viewBox="660 282 723 438">
<defs><linearGradient id="mv" x1="0" y1="282" x2="0" y2="720" gradientUnits="userSpaceOnUse"><stop offset="0" stop-color="#141414" stop-opacity="1"/><stop offset=".2" stop-color="#141414" stop-opacity="0"/><stop offset=".82" stop-color="#141414" stop-opacity="0"/><stop offset="1" stop-color="#141414" stop-opacity="1"/></linearGradient><linearGradient id="mh" x1="660" y1="0" x2="1383" y2="0" gradientUnits="userSpaceOnUse"><stop offset="0" stop-color="#141414" stop-opacity="1"/><stop offset=".125" stop-color="#141414" stop-opacity="0"/><stop offset="1" stop-color="#141414" stop-opacity="0"/></linearGradient></defs>
<g fill="#383838">
<polygon points="688.4,725.1 691.6,713.1 697.9,697.3 701.0,678.3 697.9,664.1 699.5,651.5 694.7,645.2 691.6,638.9 696.3,634.2 707.3,631.8 710.5,627.1 720.0,624.7 727.9,628.6 746.8,627.1 757.9,628.6 770.5,631.0 786.3,630.2 794.2,631.8 802.0,631.0 811.5,633.4 821.0,629.4 824.1,619.9 826.5,604.2 827.3,586.8 830.5,588.4 836.0,597.9 833.6,593.1 827.3,585.2 824.1,575.8 827.3,580.5 827.3,571.0 817.8,566.3 811.5,560.0 809.9,553.7 814.7,549.7 805.2,548.9 805.2,545.8 798.9,542.6 786.3,538.7 776.8,537.1 768.9,531.6 773.6,526.8 766.5,523.7 770.5,518.9 784.7,516.6 791.0,514.2 797.3,515.8 802.0,520.5 811.5,515.8 814.7,518.9 821.0,517.4 819.4,506.3 815.5,495.3 815.5,494.6 824.1,494.6 825.7,501.0 843.1,502.5 852.6,499.4 847.8,500.2 849.4,494.6 857.3,489.9 865.2,486.8 871.5,482.0 873.1,469.4 877.8,463.9 887.3,461.5 896.7,458.3 900.0,454.4 906.3,447.3 914.2,439.4 920.5,431.5 923.7,418.9 925.3,412.6 931.6,406.3 941.0,403.9 960.0,399.9 964.7,406.3 964.7,399.9 971.0,397.6 982.1,397.6 985.2,401.5 988.4,396.8 990.8,390.5 994.7,388.9 994.7,382.6 990.0,381.0 994.7,377.1 990.8,368.4 990.0,355.8 982.1,347.9 982.1,322.6 985.2,313.1 991.5,308.4 1001.0,306.8 1010.5,295.8 1021.5,289.5 1018.4,308.4 1017.6,319.5 1024.7,323.4 1028.6,325.8 1026.3,330.5 1019.9,332.1 1017.6,340.0 1013.6,343.1 1007.3,349.4 1007.3,355.8 1004.2,362.1 1010.5,365.2 1013.6,374.7 1019.9,377.9 1031.0,379.4 1027.8,388.9 1035.7,390.5 1042.0,385.7 1051.5,382.6 1057.8,378.6 1065.7,377.9 1067.3,373.1 1072.0,373.1 1075.2,381.0 1070.5,384.2 1076.8,387.3 1079.9,393.6 1089.4,397.6 1088.6,393.6 1083.1,390.5 1097.3,387.3 1117.8,381.0 1128.9,374.7 1139.9,370.8 1150.0,368.4 1152.6,368.4 1155.8,371.5 1158.9,377.9 1163.7,380.2 1171.6,378.6 1177.9,373.1 1179.5,366.8 1187.3,365.2 1195.2,366.0 1200.0,365.2 1200.8,354.2 1199.2,344.7 1197.6,330.5 1198.4,314.7 1203.1,308.4 1206.3,297.4 1211.0,293.4 1222.1,291.0 1228.4,297.4 1234.7,305.3 1241.0,310.0 1248.9,306.8 1253.6,300.5 1252.8,287.9 1252.1,280.0 1383.8,280.0 1383.8,563.1 1372.0,562.3 1361.0,564.7 1356.2,574.2 1349.9,580.5 1342.0,583.6 1342.8,591.5 1340.4,601.0 1331.0,604.2 1326.2,610.5 1323.9,626.3 1321.5,632.6 1313.6,634.2 1312.0,645.2 1306.5,649.9 1313.6,659.4 1315.2,665.7 1321.5,672.0 1332.6,676.0 1345.2,677.6 1361.0,678.3 1370.4,677.6 1373.6,673.6 1383.8,668.9 1383.8,725.1 1282.0,725.1 1282.0,705.2 1288.4,697.3 1297.8,691.0 1304.1,693.3 1331.0,691.8 1329.4,687.8 1343.6,685.4 1329.4,679.9 1316.8,679.1 1304.1,681.5 1293.1,688.6 1282.0,688.6 1278.9,684.7 1266.3,681.5 1253.6,681.5 1242.6,686.2 1228.4,689.4 1223.6,691.0 1223.6,697.3 1228.4,705.2 1237.9,725.1 1192.1,725.1 1185.8,713.1 1179.5,703.6 1170.0,691.0 1168.4,683.1 1171.6,673.6 1173.1,665.7 1163.7,659.4 1149.5,648.4 1150.0,648.4 1136.7,638.9 1121.0,629.4 1111.5,626.3 1097.3,613.6 1102.0,612.8 1094.1,604.2 1094.9,599.4 1089.4,593.1 1084.7,592.3 1078.3,601.0 1075.2,596.3 1072.8,588.4 1075.2,586.8 1074.4,582.9 1067.3,582.1 1051.5,588.4 1053.1,597.9 1051.5,602.6 1052.3,613.6 1057.8,619.9 1067.3,626.3 1073.6,631.0 1078.3,642.0 1083.1,649.9 1097.3,661.0 1111.5,662.6 1116.2,664.9 1112.3,669.7 1124.1,676.8 1133.6,679.9 1143.1,687.8 1150.0,691.0 1149.5,689.4 1155.0,697.3 1151.0,703.6 1146.3,709.9 1143.2,725.1 1114.6,725.1 1113.1,709.9 1108.3,700.4 1095.7,694.1 1092.6,687.8 1081.5,684.7 1073.6,676.8 1061.0,673.6 1048.4,664.1 1038.9,653.9 1032.6,651.5 1024.7,642.0 1021.5,635.7 1016.8,621.5 1007.3,616.8 994.7,611.3 988.4,612.8 980.5,621.5 967.9,626.3 956.8,635.7 947.3,638.9 928.4,631.8 912.6,628.6 900.0,635.7 903.1,635.7 897.5,642.0 898.3,649.9 901.5,654.7 899.9,661.0 893.6,667.3 881.0,675.2 865.2,679.9 858.9,683.9 860.4,686.2 854.1,689.4 846.2,702.0 841.5,709.9 841.5,725.1"/>
<polygon points="673.4,439.4 680.5,447.3 683.7,451.2 691.6,451.2 701.0,448.1 707.3,444.1 713.7,442.6 720.0,438.6 729.4,435.5 738.9,433.9 742.1,426.8 745.2,415.7 742.9,401.5 740.5,390.5 747.6,387.3 753.9,378.6 750.8,371.5 745.2,360.5 737.3,358.1 727.9,362.1 728.7,355.8 723.9,355.0 720.0,358.9 712.1,358.9 706.6,362.1 705.8,368.4 700.2,371.5 708.1,374.7 702.6,382.6 691.6,382.6 678.2,384.2 680.5,390.5 685.3,393.6 677.4,401.5 683.7,406.3 694.7,410.2 690.0,414.2 688.4,420.5 682.1,425.2 693.9,423.6 685.3,428.4 680.5,433.1"/>
<polygon points="751.5,286.3 762.6,285.5 779.9,287.1 781.5,291.8 814.7,291.8 816.2,296.6 811.5,306.8 806.8,317.9 802.0,324.2 794.2,326.6 801.3,329.7 794.2,334.5 789.4,336.8 802.0,337.6 811.5,342.3 818.6,350.2 821.0,358.9 825.7,371.5 833.6,376.3 843.9,386.5 843.1,390.5 847.0,398.4 838.3,397.6 846.2,401.5 851.8,411.0 847.8,417.3 851.8,419.7 855.7,415.7 865.2,415.7 873.1,420.5 875.4,426.8 872.3,437.8 868.3,443.4 860.4,445.7 860.4,450.5 855.7,452.8 869.9,455.2 868.3,461.5 862.0,464.7 851.0,468.6 838.3,468.6 827.3,469.4 825.7,473.3 817.8,471.0 811.5,472.6 795.7,471.0 789.4,473.3 786.3,481.2 781.5,482.0 776.8,479.7 767.3,481.2 759.4,486.8 751.5,485.2 757.9,480.4 764.2,474.1 770.5,467.0 773.6,461.5 779.9,458.3 792.6,458.3 798.9,452.8 804.4,447.3 794.2,453.6 786.3,453.6 776.8,449.7 770.5,446.5 764.2,448.1 759.4,445.7 758.6,441.8 767.3,437.8 775.2,433.9 778.4,426.8 776.8,418.9 768.9,419.7 773.6,413.4 779.9,409.4 787.8,407.1 794.2,405.5 798.9,407.1 794.9,401.5 798.1,387.3 789.4,381.0 786.3,374.7 787.8,368.4 794.2,366.0 784.7,366.0 776.8,369.2 768.9,369.2 763.4,371.5 760.2,366.0 764.2,358.9 768.1,349.4 764.2,343.1 767.3,337.6 761.0,333.7 757.9,340.0 754.7,349.4 750.0,355.0 751.5,343.1 754.7,330.5 758.6,317.9 750.0,316.3 748.4,311.6 752.3,303.7 749.2,298.9 752.3,291.0"/>
<polygon points="1042.0,280.0 1042.0,284.7 1049.9,303.7 1057.8,319.5 1061.8,322.6 1057.8,327.3 1059.4,330.5 1054.7,332.1 1061.0,341.6 1062.6,352.6 1067.3,355.0 1078.3,353.4 1084.7,349.4 1083.1,343.1 1086.2,338.4 1092.6,333.7 1109.9,332.9 1114.6,328.9 1121.0,319.5 1124.1,303.7 1122.5,287.9 1122.5,280.0"/>
<polygon points="1121.0,330.5 1125.7,314.7 1131.2,300.5 1129.6,314.7 1123.3,331.3"/>
<polygon points="1149.5,294.2 1155.8,287.9 1161.3,295.8 1155.0,305.3 1151.0,311.6"/>
<polygon points="1010.5,351.0 1018.4,347.9 1026.3,352.6 1027.8,358.9 1023.1,363.6 1013.6,360.5"/>
<polygon points="1034.2,343.1 1038.9,339.2 1043.6,343.1 1048.4,335.2 1056.2,333.7 1057.8,346.3 1051.5,349.4 1053.1,355.8 1048.4,358.9 1042.0,368.4 1037.3,362.1 1032.6,355.8"/>
<polygon points="1031.0,366.0 1040.5,368.4 1042.0,373.1 1032.6,371.5"/>
<polygon points="1091.8,356.5 1098.9,359.7 1098.1,363.6 1091.8,361.3"/>
<polygon points="1002.6,640.5 1005.0,651.5 1004.2,661.0 1001.0,670.5 994.7,672.0 990.8,662.6 990.0,653.1 996.3,648.4 1001.8,646.8"/>
<polygon points="983.6,683.1 994.7,679.9 1001.0,675.2 1007.3,681.5 1009.7,689.4 1007.3,698.9 1007.3,725.1 986.8,725.1 986.8,697.3 982.9,686.2"/>
<polygon points="734.2,295.8 742.1,292.6 748.4,298.9 751.5,303.7 747.6,308.4 742.1,311.6 738.9,306.8 735.8,302.1"/>
<polygon points="740.5,321.0 748.4,320.2 750.8,325.8 745.2,329.7 740.5,328.9"/>
<polygon points="738.1,343.1 745.2,339.2 750.0,334.5 748.4,341.6 742.1,347.9"/>
<polygon points="756.3,345.5 759.4,344.7 761.0,349.4 757.9,352.6 755.5,349.4"/>
<polygon points="767.3,387.3 770.5,381.0 772.8,379.4 773.3,382.6 770.5,387.3 768.1,388.9"/>
<polygon points="770.5,405.5 774.4,404.7 776.8,408.6 773.6,411.8 770.5,409.4"/>
<polygon points="821.0,471.0 826.5,470.2 827.3,472.6 823.4,473.8"/>
<polygon points="887.3,708.3 896.7,702.0 903.8,705.2 896.7,711.5"/>
</g>
<g fill="none" stroke="#313131" stroke-width="0.8" stroke-linejoin="round"><polyline points="966.3,403.1 964.2,417.9 959.9,426.3 962.1,434.7 951.5,443.1 945.2,447.3 949.4,455.7 941.0,464.2 945.2,472.6"/><polyline points="888.4,464.2 901.0,472.6 913.7,481.0 915.8,488.4 926.3,489.4 938.9,497.8 949.4,499.9 953.6,494.7 947.3,485.2 951.5,478.9 945.2,472.6"/><polyline points="938.9,497.8 951.5,501.0 959.9,506.2 970.5,508.3 981.0,510.4 976.8,518.9 972.6,531.5 971.5,542.0 987.3,538.8 1006.2,544.1 1016.8,548.3 1031.5,544.1 1048.3,542.0 1060.9,539.9 1063.0,544.1 1058.8,531.5 1065.1,527.3 1075.7,518.9 1076.7,514.7"/><polyline points="1052.5,483.1 1054.6,493.6 1065.1,504.1 1076.7,514.7 1082.0,519.9 1090.4,518.9 1096.7,510.4 1111.4,514.7 1128.3,516.8 1143.0,510.4 1151.4,502.0 1159.8,498.9 1151.4,489.4 1140.9,483.1 1128.3,485.2 1117.7,476.8 1107.2,470.5 1094.6,463.1 1088.3,464.2 1077.8,468.4 1063.0,475.7 1056.7,477.8"/><polyline points="1086.2,396.8 1082.0,417.9 1090.4,430.5 1092.5,447.3 1096.7,457.8 1094.6,463.1"/><polyline points="1159.8,498.9 1174.6,506.2 1185.1,502.0 1199.8,501.0 1212.4,506.2 1225.0,508.3"/><polyline points="1237.7,384.2 1241.9,401.0 1246.1,420.0 1233.5,430.5 1239.8,447.3 1248.2,468.4 1246.1,476.8 1233.5,489.4 1225.0,502.0 1225.0,508.3 1216.6,516.8 1225.0,531.5"/><polyline points="1271.3,384.2 1254.5,390.5 1237.7,384.2"/><polyline points="1382.8,436.8 1359.7,443.1 1355.5,455.7 1342.9,451.5 1321.8,451.5 1296.6,445.2 1275.5,441.0 1254.5,442.1 1246.1,449.4 1239.8,447.3"/><polyline points="1004.1,552.5 1016.8,558.8 1027.3,560.9 1035.7,555.7 1048.3,554.6 1065.1,563.0 1090.4,567.3 1103.0,563.0 1117.7,558.8 1122.0,548.3 1125.1,539.9 1131.4,535.7 1128.3,523.1 1128.3,516.8"/><polyline points="971.5,542.0 964.2,546.2 959.9,554.6 953.6,558.8 947.3,567.3 947.3,572.5 959.9,567.3 959.9,575.7 972.6,578.8 983.1,569.4 987.3,568.3 995.7,579.9 1002.0,567.3 1014.7,571.5 1018.9,563.0 1027.3,560.9"/><polyline points="959.9,579.9 964.2,590.4 957.8,595.7 964.2,603.0 959.9,609.3 972.6,617.7 976.8,624.1"/><polyline points="1131.4,535.7 1143.0,537.8 1159.8,536.7 1161.9,531.5 1178.8,529.4 1191.4,521.0 1204.0,521.0 1212.4,525.2 1225.0,531.5"/><polyline points="1117.7,558.8 1128.3,569.4 1143.0,582.0 1161.9,579.9 1178.8,573.6 1195.6,571.5 1206.1,560.9 1214.5,544.1 1225.0,535.7 1225.0,531.5 1246.1,535.7 1262.9,538.8 1279.7,531.5 1292.4,527.3 1307.1,523.1 1321.8,531.5 1332.3,535.7 1334.4,546.2 1342.9,554.6 1349.2,565.1 1347.1,569.4"/><polyline points="1292.4,527.3 1300.8,537.8 1309.2,548.3 1317.6,560.9 1315.5,577.8 1319.7,588.3 1330.2,592.5 1338.7,586.2 1340.8,582.0"/><polyline points="1069.4,573.6 1082.0,571.5 1090.4,567.3"/><polyline points="1073.6,588.3 1090.4,587.2 1100.9,588.3 1103.0,582.0 1107.2,575.7 1117.7,567.3"/><polyline points="1149.3,640.9 1132.5,628.3 1115.6,611.4 1109.3,596.7 1122.0,594.6 1143.0,596.7 1159.8,600.9 1168.2,599.9 1161.9,579.9"/><polyline points="1168.2,599.9 1170.3,607.2 1166.1,611.4 1172.4,622.0 1168.2,632.5 1159.8,634.6 1153.5,645.1"/><polyline points="1195.6,571.5 1204.0,588.3 1204.0,603.0 1220.8,607.2 1229.3,617.7 1218.7,626.2 1227.1,636.7 1220.8,645.1 1208.2,647.2"/><polyline points="1229.3,622.0 1250.3,624.1 1271.3,626.2 1288.2,617.7 1305.0,619.8 1321.8,626.2"/><polyline points="707.3,374.7 712.1,381.0 720.0,385.7 726.3,381.0 731.0,382.6 735.8,388.1 740.5,388.9"/><polyline points="816.2,633.4 822.6,638.9 835.2,643.6 846.2,646.0 857.3,643.6 869.9,647.6 879.4,653.1 888.9,652.3 898.3,650.7"/><polyline points="699.5,659.4 708.9,664.1 723.1,661.8 735.8,661.0 737.3,667.3 742.1,669.7 731.0,679.9 731.8,689.4 727.9,698.9 729.4,708.3"/></g>
<rect x="660" y="282" width="723" height="438" fill="url(#mv)"/><rect x="660" y="282" width="723" height="438" fill="url(#mh)"/>
<circle cx="1052" cy="476" r="5.200" fill="#a3a3a3"/><circle cx="1022" cy="498.200" r="5.200" fill="#d50c2d"/>
</svg>
<div style="left:1338px;top:293px;width:33px;height:32px;background:#565656;border-radius:5px;"></div>
<svg style="left:1346px;top:301px" width="17" height="17" viewBox="0 0 17 17" fill="none" stroke="#f0f0f0" stroke-width="1.200"><path d="M9.500 2.500H14.500V7.500M7.500 14.500H2.500V9.500"/></svg>
<div style="left:1383px;top:281px;width:352px;height:439px;background:#262626;border-radius:6px;"></div>
<div style="left:1383px;top:281px;width:352px;height:38px;background:#2c2c2c;border-radius:0px;border-radius:6px 6px 0 0;"></div>
<span id="t39" style="font-size:12.5px;line-height:16px;color:#f5f5f5;top:292.00px;white-space:pre;-webkit-text-stroke:0.2px #f5f5f5;letter-spacing:-0.466px;left:1407px;">ALL LOCATIONS</span>
<svg style="left:1694px;top:291px" width="18" height="17" viewBox="0 0 18 17" fill="none" stroke="#f0f0f0" stroke-width="1.300" stroke-linejoin="round"><path d="M1.500 3.800L6.500 1.800L11.500 3.800L16.500 1.800V13.200L11.500 15.200L6.500 13.200L1.500 15.200ZM6.500 1.800V13.200M11.500 3.800V15.200"/></svg>
<div style="left:1383px;top:319px;width:352px;height:1px;background:#4a4a4a;border-radius:0px;"></div>
<div style="left:1383px;top:399px;width:352px;height:1px;background:#4a4a4a;border-radius:0px;"></div>
<div style="left:1383px;top:479px;width:352px;height:1px;background:#4a4a4a;border-radius:0px;"></div>
<div style="left:1383px;top:559px;width:352px;height:1px;background:#4a4a4a;border-radius:0px;"></div>
<div style="left:1383px;top:639px;width:352px;height:1px;background:#4a4a4a;border-radius:0px;"></div>
<div style="left:1386px;top:719px;width:346px;height:1px;background:#4a4a4a;border-radius:0px;"></div>
<div style="left:1558px;top:319px;width:1px;height:401px;background:#4a4a4a;border-radius:0px;"></div>
<svg style="left:1407px;top:351px" width="20" height="20" viewBox="0 0 16 16" fill="none" stroke="#e01535" stroke-width="1.150" stroke-linejoin="round" stroke-linecap="round"><rect x="1" y="2.800" width="14" height="10.400" rx="1"/><path d="M1 6.300H15M1 9.700H15M12.300 4.600H13M12.300 8H13M12.300 11.400H13"/></svg>
<span id="t40" style="font-size:19px;line-height:24px;color:#fafafa;top:339.80px;white-space:pre;-webkit-text-stroke:0.3px #fafafa;left:1443.3px;">2</span>
<span id="t41" style="font-size:13px;line-height:17px;color:#f5f5f5;top:362.10px;white-space:pre;-webkit-text-stroke:0.25px #f5f5f5;letter-spacing:-0.471px;left:1443.3px;">Servers</span>
<svg style="left:1583px;top:351px" width="20" height="20" viewBox="0 0 16 16" fill="none" stroke="#e01535" stroke-width="1.150" stroke-linejoin="round" stroke-linecap="round"><rect x="2.500" y="1.600" width="3" height="3" rx=".6"/><rect x="10.500" y="1.600" width="3" height="3" rx=".6"/><path d="M1 7.300H15M8 7.300L4.600 13.500H11.400ZM5.500 11.300H10.500"/></svg>
<span id="t42" style="font-size:19px;line-height:24px;color:#fafafa;top:339.80px;white-space:pre;-webkit-text-stroke:0.3px #fafafa;left:1619.3px;">0</span>
<span id="t43" style="font-size:13px;line-height:17px;color:#f5f5f5;top:362.10px;white-space:pre;-webkit-text-stroke:0.25px #f5f5f5;letter-spacing:-0.417px;left:1619.3px;">Load Balancers</span>
<svg style="left:1407px;top:431px" width="20" height="20" viewBox="0 0 16 16" fill="none" stroke="#e01535" stroke-width="1.150" stroke-linejoin="round" stroke-linecap="round"><path d="M8 14.800C8 14.800 2.600 10.600 2.600 6.700A5.400 5.400 0 0 1 13.400 6.700C13.400 10.600 8 14.800 8 14.800Z"/><path d="M6 5.200V8.400M7.700 8.400V5.200H9Q10.100 5.200 10.100 6.200Q10.100 7.100 9 7.100H7.700" stroke-width=".8"/></svg>
<span id="t44" style="font-size:19px;line-height:24px;color:#fafafa;top:419.80px;white-space:pre;-webkit-text-stroke:0.3px #fafafa;left:1443.3px;">4</span>
<span id="t45" style="font-size:13px;line-height:17px;color:#f5f5f5;top:442.10px;white-space:pre;-webkit-text-stroke:0.25px #f5f5f5;letter-spacing:-0.470px;left:1443.3px;">Primary IPs</span>
<svg style="left:1583px;top:431px" width="20" height="20" viewBox="0 0 16 16" fill="none" stroke="#e01535" stroke-width="1.150" stroke-linejoin="round" stroke-linecap="round"><path d="M4.800 8.300C2.800 8.300 2.300 5.800 4.300 5.200C4.500 2.800 7.300 1.800 8.900 3.500C10.300 2.800 12 3.800 11.800 5.300C13.600 5.800 13.200 8.300 11.400 8.300ZM8 8.300V11M1.300 11H14.700V14.300H1.300ZM11.800 12.700H12.600"/></svg>
<span id="t46" style="font-size:19px;line-height:24px;color:#fafafa;top:419.80px;white-space:pre;-webkit-text-stroke:0.3px #fafafa;left:1619.3px;">0</span>
<span id="t47" style="font-size:13px;line-height:17px;color:#f5f5f5;top:442.10px;white-space:pre;-webkit-text-stroke:0.25px #f5f5f5;letter-spacing:-0.471px;left:1619.3px;">Floating IPs</span>
<svg style="left:1407px;top:511px" width="20" height="20" viewBox="0 0 16 16" fill="none" stroke="#e01535" stroke-width="1.150" stroke-linejoin="round" stroke-linecap="round"><path d="M8 1.300L14.200 4.300V11.700L8 14.700L1.800 11.700V4.300ZM1.800 4.300L8 7.300L14.200 4.300M8 7.300V14.700"/></svg>
<span id="t48" style="font-size:19px;line-height:24px;color:#fafafa;top:499.80px;white-space:pre;-webkit-text-stroke:0.3px #fafafa;left:1443.3px;">0</span>
<span id="t49" style="font-size:13px;line-height:17px;color:#f5f5f5;top:522.10px;white-space:pre;-webkit-text-stroke:0.25px #f5f5f5;letter-spacing:-0.411px;left:1443.3px;">Volumes</span>
<svg style="left:1583px;top:511px" width="20" height="20" viewBox="0 0 16 16" fill="none" stroke="#e01535" stroke-width="1.150" stroke-linejoin="round" stroke-linecap="round"><rect x="1.200" y="2.200" width="13.600" height="3.600" rx="1.200"/><path d="M8 5.800V12.800M3.500 12.600H12.500M12 4H12.600"/><circle cx="8" cy="12.600" r=".9" fill="#e01535"/></svg>
<span id="t50" style="font-size:19px;line-height:24px;color:#fafafa;top:499.80px;white-space:pre;-webkit-text-stroke:0.3px #fafafa;left:1619.3px;">0</span>
<span id="t51" style="font-size:13px;line-height:17px;color:#f5f5f5;top:522.10px;white-space:pre;-webkit-text-stroke:0.25px #f5f5f5;letter-spacing:-0.211px;left:1619.3px;">Networks</span>
<svg style="left:1407px;top:591px" width="20" height="20" viewBox="0 0 16 16" fill="none" stroke="#e01535" stroke-width="1.150" stroke-linejoin="round" stroke-linecap="round"><path d="M1.300 8.800H14.700V14.500H1.300ZM1.300 11.600H14.700M8 8.800V11.600M4.800 11.600V14.500M11.200 11.600V14.500M5.600 8.600C4.600 6.800 5.800 5.400 6.600 4.800C6.600 5.800 7.200 6.200 7.400 5.800C7.800 4.800 7.200 3 7.900 1.400C9 2.800 10.800 4.200 10.600 6.400C10.600 7.400 10.300 8 10 8.600"/></svg>
<span id="t52" style="font-size:19px;line-height:24px;color:#fafafa;top:579.80px;white-space:pre;-webkit-text-stroke:0.3px #fafafa;left:1443.3px;">1</span>
<span id="t53" style="font-size:13px;line-height:17px;color:#f5f5f5;top:602.10px;white-space:pre;-webkit-text-stroke:0.25px #f5f5f5;letter-spacing:-0.422px;left:1443.3px;">Firewalls</span>
<svg style="left:1583px;top:591px" width="20" height="20" viewBox="0 0 16 16" fill="none" stroke="#e01535" stroke-width="1.150" stroke-linejoin="round" stroke-linecap="round"><path d="M1.300 2.200H14.700V3.600H1.300ZM2.600 3.800L4 14.300H12L13.400 3.800M3.300 8.800C5 10.600 11 10.600 12.700 8.800"/></svg>
<span id="t54" style="font-size:19px;line-height:24px;color:#fafafa;top:579.80px;white-space:pre;-webkit-text-stroke:0.3px #fafafa;left:1619.3px;">0</span>
<span id="t55" style="font-size:13px;line-height:17px;color:#f5f5f5;top:602.10px;white-space:pre;-webkit-text-stroke:0.25px #f5f5f5;letter-spacing:-0.393px;left:1619.3px;">Buckets</span>
<svg style="left:1407px;top:671px" width="20" height="20" viewBox="0 0 16 16" fill="none" stroke="#e01535" stroke-width="1.150" stroke-linejoin="round" stroke-linecap="round"><path d="M1.200 2.300H14.800V5.300H1.200ZM2.200 5.300V14H13.800V5.300M5.600 8.600H10.400"/></svg>
<span id="t56" style="font-size:19px;line-height:24px;color:#fafafa;top:659.80px;white-space:pre;-webkit-text-stroke:0.3px #fafafa;left:1443.3px;">0</span>
<span id="t57" style="font-size:13px;line-height:17px;color:#f5f5f5;top:682.10px;white-space:pre;-webkit-text-stroke:0.25px #f5f5f5;letter-spacing:-0.483px;left:1443.3px;">Storage Boxes</span>
<svg style="left:1583px;top:671px" width="20" height="20" viewBox="0 0 16 16" fill="none" stroke="#e01535" stroke-width="1.150" stroke-linejoin="round" stroke-linecap="round"><circle cx="8" cy="8" r="6.800"/><ellipse cx="8" cy="8" rx="3" ry="6.800"/><path d="M8 1.200V14.800M1.200 8H14.800M2.200 4.600H13.800M2.200 11.400H13.800"/></svg>
<span id="t58" style="font-size:19px;line-height:24px;color:#fafafa;top:659.80px;white-space:pre;-webkit-text-stroke:0.3px #fafafa;left:1619.3px;">0</span>
<span id="t59" style="font-size:13px;line-height:17px;color:#f5f5f5;top:682.10px;white-space:pre;-webkit-text-stroke:0.25px #f5f5f5;letter-spacing:-0.578px;left:1619.3px;">DNS Zones</span>
<div style="left:1755px;top:281px;width:345px;height:439px;background:#262626;border-radius:6px;"></div>
<div style="left:1755px;top:429.5px;width:331px;height:74px;background:#292929;border-radius:0px;"></div>
<div style="left:1755px;top:577.5px;width:331px;height:74px;background:#292929;border-radius:0px;"></div>
<div style="left:2086px;top:357px;width:14px;height:363px;background:#2b2b2b;border-radius:0px;border-radius:0 0 6px 0;"></div>
<svg style="left:1785px;top:317px" width="20" height="20" viewBox="0 0 24 25" fill="none" stroke="#e01535" stroke-width="1.700" stroke-linejoin="round" stroke-linecap="round"><path d="M12 3C8.300 3 6.600 6 6.600 9.200C6.600 13 5.400 15.300 3.800 17.200C3.400 17.800 3.700 18.500 4.400 18.500H19.600C20.300 18.500 20.600 17.800 20.200 17.200C18.600 15.300 17.400 13 17.400 9.200C17.400 6 15.700 3 12 3Z"/><path d="M9.800 19.500A2.300 2.300 0 0 0 14.200 19.500"/></svg>
<span id="t60" style="font-size:18px;line-height:24px;color:#fafafa;top:314.00px;white-space:pre;font-weight:700;letter-spacing:-0.202px;left:1815.5px;">ACTIVITIES</span>
<span id="t61" style="font-size:13px;line-height:17px;color:#e01535;top:317.80px;white-space:pre;-webkit-text-stroke:0.3px #e01535;letter-spacing:0.117px;left:2008px;">View all</span>
<svg style="left:2057px;top:321px" width="8" height="11" viewBox="0 0 8 11"><path d="M1.500 1.200L6 5.500L1.500 9.800" stroke="#e01535" stroke-width="1.700" fill="none"/></svg>
<svg style="left:2087px;top:360px" width="11" height="8" viewBox="0 0 11 8"><path d="M0.800 7L5.500 1.800L10.200 7Z" fill="#a8a8a8"/></svg>
<svg style="left:2087px;top:708px" width="11" height="8" viewBox="0 0 11 8"><path d="M0.800 1L5.500 6.200L10.200 1Z" fill="#a8a8a8"/></svg>
<div style="left:2088px;top:374px;width:9px;height:179px;background:#9e9e9e;border-radius:4.5px;"></div>
<svg style="left:1775px;top:371.7px" width="36" height="36" viewBox="0 0 36 36"><circle cx="18" cy="18" r="18" fill="#575757"/></svg>
<svg style="left:1785px;top:381.7px" width="16" height="16" viewBox="0 0 16 16" fill="none" stroke="#f2f2f2" stroke-width="1.200"><rect x="1" y="2.800" width="14" height="10.400" rx="1"/><path d="M1 6.300H15M1 9.700H15M12.300 4.600H13M12.300 8H13M12.300 11.400H13"/></svg>
<span id="t62" style="font-size:17px;line-height:22px;color:#f7f7f7;top:373.50px;white-space:pre;letter-spacing:-0.178px;left:1827.3px;">Server type changed</span>
<span id="t63" style="font-size:13px;line-height:17px;color:#9c9c9c;top:396.30px;white-space:pre;letter-spacing:-0.577px;left:2000.3000000000002px;">18 days ago</span>
<svg style="left:1775px;top:445.7px" width="36" height="36" viewBox="0 0 36 36"><circle cx="18" cy="18" r="18" fill="#575757"/></svg>
<svg style="left:1785px;top:455.7px" width="16" height="16" viewBox="0 0 16 16" fill="none" stroke="#f2f2f2" stroke-width="1.200"><rect x="1" y="2.800" width="14" height="10.400" rx="1"/><path d="M1 6.300H15M1 9.700H15M12.300 4.600H13M12.300 8H13M12.300 11.400H13"/></svg>
<span id="t64" style="font-size:17px;line-height:22px;color:#f7f7f7;top:447.50px;white-space:pre;letter-spacing:-0.186px;left:1827.3px;">Server type is being changed</span>
<span id="t65" style="font-size:13px;line-height:17px;color:#9c9c9c;top:470.30px;white-space:pre;letter-spacing:-0.577px;left:2000.3000000000002px;">18 days ago</span>
<svg style="left:1775px;top:519.7px" width="36" height="36" viewBox="0 0 36 36"><circle cx="18" cy="18" r="18" fill="#575757"/></svg>
<svg style="left:1785px;top:529.7px" width="16" height="16" viewBox="0 0 16 16" fill="none" stroke="#f2f2f2" stroke-width="1.200"><rect x="1" y="2.800" width="14" height="10.400" rx="1"/><path d="M1 6.300H15M1 9.700H15M12.300 4.600H13M12.300 8H13M12.300 11.400H13"/></svg>
<span id="t66" style="font-size:17px;line-height:22px;color:#f7f7f7;top:521.50px;white-space:pre;letter-spacing:-0.200px;left:1827.3px;">Server stopped</span>
<span id="t67" style="font-size:13px;line-height:17px;color:#9c9c9c;top:544.30px;white-space:pre;letter-spacing:-0.577px;left:2000.3000000000002px;">18 days ago</span>
<svg style="left:1775px;top:593.7px" width="36" height="36" viewBox="0 0 36 36"><circle cx="18" cy="18" r="18" fill="#575757"/></svg>
<svg style="left:1785px;top:603.7px" width="16" height="16" viewBox="0 0 16 16" fill="none" stroke="#f2f2f2" stroke-width="1.200"><rect x="1" y="2.800" width="14" height="10.400" rx="1"/><path d="M1 6.300H15M1 9.700H15M12.300 4.600H13M12.300 8H13M12.300 11.400H13"/></svg>
<span id="t68" style="font-size:17px;line-height:22px;color:#f7f7f7;top:595.50px;white-space:pre;letter-spacing:-0.200px;left:1827.3px;">Server is being stopped</span>
<span id="t69" style="font-size:13px;line-height:17px;color:#9c9c9c;top:618.30px;white-space:pre;letter-spacing:-0.577px;left:2000.3000000000002px;">18 days ago</span>
<svg style="left:1775px;top:667.7px" width="36" height="36" viewBox="0 0 36 36"><circle cx="18" cy="18" r="18" fill="#575757"/></svg>
<svg style="left:1785px;top:677.7px" width="16" height="16" viewBox="0 0 16 16" fill="none" stroke="#f2f2f2" stroke-width="1.200"><circle cx="3.600" cy="8" r="2.200"/><path d="M5.800 8H15M13.300 8V10.300"/></svg>
<svg style="left:1798.500px;top:692.2px" width="16" height="16" viewBox="0 0 15 15"><circle cx="7.500" cy="7.500" r="7.500" fill="#b7f1cd"/><path d="M4.300 7.800L6.600 10L10.800 5.300" stroke="#1fa64f" stroke-width="1.300" fill="none"/></svg>
<span id="t70" style="font-size:17px;line-height:22px;color:#f7f7f7;top:669.50px;white-space:pre;letter-spacing:-0.421px;left:1827.3px;">SSH key updated</span>
<span id="t71" style="font-size:13px;line-height:17px;color:#9c9c9c;top:692.30px;white-space:pre;letter-spacing:-0.368px;left:1998.0000000000002px;">28 days ago</span>
<svg style="left:1799px;top:471.500px" width="15" height="15" viewBox="0 0 15 15"><circle cx="7.500" cy="7.500" r="7.500" fill="#575757"/></svg>
<svg style="left:1755px;top:355px" width="345" height="365" viewBox="1755 355 345 365" fill="none" stroke="#1f1f1f" stroke-linecap="round" stroke-linejoin="round"><path d="M1788 403.500C1820 402 1860 402 1890 403C1905 403.500 1912 404.500 1915 404.500" stroke-width="24"/><path d="M1776 469C1790 467 1815 469 1840 472C1870 476 1895 478 1913 479" stroke-width="21"/><path d="M1787 549.500C1805 548 1830 551 1850 552.500C1870 553.500 1890 553.500 1898 553.500" stroke-width="23"/><path d="M1790 623C1800 619 1815 620 1835 623C1860 627 1885 633 1899 634.500" stroke-width="21"/><path d="M1826 706C1850 704 1880 704.500 1914 706.500" stroke-width="24"/></svg>
<svg style="left:1960px;top:825px" width="140" height="50" viewBox="1960 825 140 50" fill="none" stroke="#202020" stroke-linecap="round" stroke-linejoin="round"><path d="M1976 845.500C2000 845.500 2030 848 2050 850C2060 851 2072 852 2077 852.500" stroke-width="23"/><path d="M2045 853.500C2055 854 2068 854 2076 853.500" stroke-width="23"/></svg>
<div style="left:660px;top:752px;width:345px;height:68px;background:#262626;border-radius:5px;"></div>
<svg style="left:681.500px;top:776.500px" width="20" height="20" viewBox="0 0 16 16" fill="none" stroke="#e01535" stroke-width="1.200" stroke-linecap="round"><circle cx="3.600" cy="8" r="2.200"/><path d="M5.800 8H15M13.300 8V10.300"/></svg>
<span id="t72" style="font-size:17px;line-height:22px;color:#fafafa;top:775.50px;white-space:pre;-webkit-text-stroke:0.3px #fafafa;letter-spacing:-0.541px;left:718.4px;">Add SSH Key</span>
<div style="left:660px;top:852px;width:345px;height:319px;background:#262626;border-radius:6px;"></div>
<span id="t73" style="font-size:18px;line-height:24px;color:#fafafa;top:885.00px;white-space:pre;font-weight:700;letter-spacing:-0.126px;left:692.3px;">HETZNER DOCS</span>
<span id="t74" style="font-size:16.5px;line-height:22px;color:#f2f2f2;top:932.20px;white-space:pre;letter-spacing:0.009px;left:692.3px;">Find help in our comprehensive</span>
<span id="t75" style="font-size:16.5px;line-height:22px;color:#f2f2f2;top:956.20px;white-space:pre;letter-spacing:0.106px;left:692.3px;">collection of guides and</span>
<span id="t76" style="font-size:16.5px;line-height:22px;color:#f2f2f2;top:980.20px;white-space:pre;letter-spacing:0.042px;left:692.3px;">documentation. Learn how to easily</span>
<span id="t77" style="font-size:16.5px;line-height:22px;color:#f2f2f2;top:1004.20px;white-space:pre;letter-spacing:0.100px;left:692.3px;">manage our user-friendly Hetzner</span>
<span id="t78" style="font-size:16.5px;line-height:22px;color:#f2f2f2;top:1028.20px;white-space:pre;letter-spacing:-0.078px;left:692.3px;">Console.</span>
<div style="left:692.3px;top:1095px;width:280.7px;height:44px;background:#595959;border-radius:5px;"></div>
<span id="t79" style="font-size:17px;line-height:22px;color:#fafafa;top:1105.50px;white-space:pre;font-weight:700;letter-spacing:-0.165px;left:770px;">Visit Hetzner Docs</span>
<svg style="left:748px;top:1109.500px" width="14" height="14" viewBox="0 0 14 14" fill="none" stroke="#f0f0f0" stroke-width="1.200" stroke-linecap="round" stroke-linejoin="round"><path d="M6 2.600H3.200Q1.800 2.600 1.800 4V10.800Q1.800 12.200 3.200 12.200H10Q11.400 12.200 11.400 10.800V8M8.300 1.500H12.500V5.700M12.500 1.500L6.300 7.700"/></svg>
<div style="left:1025px;top:852px;width:345px;height:319px;background:#262626;border-radius:6px;"></div>
<span id="t80" style="font-size:18px;line-height:24px;color:#fafafa;top:885.00px;white-space:pre;font-weight:700;letter-spacing:-0.018px;left:1057.3px;">COMMUNITY TUTORIALS</span>
<span id="t81" style="font-size:16.5px;line-height:22px;color:#f2f2f2;top:932.20px;white-space:pre;letter-spacing:0.008px;left:1057.3px;">Share your expertise, get rewarded</span>
<span id="t82" style="font-size:16.5px;line-height:22px;color:#f2f2f2;top:956.20px;white-space:pre;letter-spacing:0.160px;left:1057.3px;">for your contributions, and support</span>
<span id="t83" style="font-size:16.5px;line-height:22px;color:#f2f2f2;top:980.20px;white-space:pre;letter-spacing:0.103px;left:1057.3px;">other users with your knowledge.</span>
<span id="t84" style="font-size:16.5px;line-height:22px;color:#f2f2f2;top:1004.20px;white-space:pre;letter-spacing:0.111px;left:1057.3px;">Benefit from useful tutorials yourself</span>
<span id="t85" style="font-size:16.5px;line-height:22px;color:#f2f2f2;top:1028.20px;white-space:pre;letter-spacing:0.079px;left:1057.3px;">and help build a free collection of</span>
<span id="t86" style="font-size:16.5px;line-height:22px;color:#f2f2f2;top:1052.20px;white-space:pre;letter-spacing:0.133px;left:1057.3px;">high-quality guides for developers.</span>
<div style="left:1057.3px;top:1095px;width:280.7px;height:44px;background:#595959;border-radius:5px;"></div>
<span id="t87" style="font-size:17px;line-height:22px;color:#fafafa;top:1105.50px;white-space:pre;font-weight:700;letter-spacing:-0.156px;left:1153.7px;">Visit Tutorials</span>
<svg style="left:1131.7px;top:1109.500px" width="14" height="14" viewBox="0 0 14 14" fill="none" stroke="#f0f0f0" stroke-width="1.200" stroke-linecap="round" stroke-linejoin="round"><path d="M6 2.600H3.200Q1.800 2.600 1.800 4V10.800Q1.800 12.200 3.200 12.200H10Q11.400 12.200 11.400 10.800V8M8.300 1.500H12.500V5.700M12.500 1.500L6.300 7.700"/></svg>
<div style="left:1390px;top:852px;width:345px;height:319px;background:#262626;border-radius:6px;"></div>
<span id="t88" style="font-size:18px;line-height:24px;color:#fafafa;top:885.00px;white-space:pre;font-weight:700;letter-spacing:-0.252px;left:1422.3px;">API DOCS</span>
<span id="t89" style="font-size:16.5px;line-height:22px;color:#f2f2f2;top:932.20px;white-space:pre;letter-spacing:-0.174px;left:1422.3px;">Explore our comprehensive REST API</span>
<span id="t90" style="font-size:16.5px;line-height:22px;color:#f2f2f2;top:956.20px;white-space:pre;letter-spacing:0.009px;left:1422.3px;">and CLI client. Access detailed</span>
<span id="t91" style="font-size:16.5px;line-height:22px;color:#f2f2f2;top:980.20px;white-space:pre;letter-spacing:0.071px;left:1422.3px;">documentation, review changelogs,</span>
<span id="t92" style="font-size:16.5px;line-height:22px;color:#f2f2f2;top:1004.20px;white-space:pre;letter-spacing:-0.015px;left:1422.3px;">and discover all the features available</span>
<span id="t93" style="font-size:16.5px;line-height:22px;color:#f2f2f2;top:1028.20px;white-space:pre;letter-spacing:0.043px;left:1422.3px;">to streamline your development</span>
<span id="t94" style="font-size:16.5px;line-height:22px;color:#f2f2f2;top:1052.20px;white-space:pre;letter-spacing:0.080px;left:1422.3px;">process.</span>
<div style="left:1422.3px;top:1095px;width:280.7px;height:44px;background:#595959;border-radius:5px;"></div>
<span id="t95" style="font-size:17px;line-height:22px;color:#fafafa;top:1105.50px;white-space:pre;font-weight:700;letter-spacing:-0.455px;left:1537.5px;">API Docs</span>
<svg style="left:1515.5px;top:1109.500px" width="14" height="14" viewBox="0 0 14 14" fill="none" stroke="#f0f0f0" stroke-width="1.200" stroke-linecap="round" stroke-linejoin="round"><path d="M6 2.600H3.200Q1.800 2.600 1.800 4V10.800Q1.800 12.200 3.200 12.200H10Q11.400 12.200 11.400 10.800V8M8.300 1.500H12.500V5.700M12.500 1.500L6.300 7.700"/></svg>
<span id="t96" style="font-size:12.5px;line-height:16px;color:#8f8f8f;top:1350.50px;white-space:pre;letter-spacing:-0.125px;left:2143px;">Legal Notice</span>
<span id="t97" style="font-size:12.5px;line-height:16px;color:#8f8f8f;top:1350.50px;white-space:pre;letter-spacing:-0.197px;left:2225.5px;">Data Privacy</span>
<span id="t98" style="font-size:12.5px;line-height:16px;color:#8f8f8f;top:1350.50px;white-space:pre;letter-spacing:-0.182px;left:2308.5px;">System Policies</span>
<span id="t99" style="font-size:12.5px;line-height:16px;color:#8f8f8f;top:1350.50px;white-space:pre;letter-spacing:-0.095px;left:2408.5px;">Terms and Conditions</span>
<div style="left:2217.5px;top:1355px;width:2px;height:2px;background:#8f8f8f;border-radius:1px;"></div>
<div style="left:2300.5px;top:1355px;width:2px;height:2px;background:#8f8f8f;border-radius:1px;"></div>
<div style="left:2400.5px;top:1355px;width:2px;height:2px;background:#8f8f8f;border-radius:1px;"></div>
<div style="left:0px;top:1380px;width:2533px;height:46px;background:linear-gradient(90deg,#1e1c1e 0%,#211b1f 8%,#32191d 12%,#2a1a31 16%,#3a1a1d 20%,#2a1b21 26%,#231c21 33%,#261b20 40%,#2f1c1f 47%,#2c1c1f 56%,#301b1d 64%,#371a1b 72%,#431918 82%,#2c1c26 88%,#271d27 92%,#241e24 100%);border-radius:0px;"></div>
<div style="left:0px;top:1379px;width:2533px;height:1px;background:#3a3538;border-radius:0px;"></div>
<svg style="left:6px;top:1384px" width="32" height="34" viewBox="0 0 32 34"><defs><linearGradient id="wc" x1="0" y1="0" x2="0" y2="1"><stop offset="0" stop-color="#9fb6ee"/><stop offset="1" stop-color="#dbe5f8"/></linearGradient></defs><path d="M6 12.500L11 8.500H19L24 13C26.500 14 26 18 23.500 19L20 21.500H6C2.500 21.500 1.500 17.500 4 15.500Z" fill="url(#wc)"/><path d="M3.500 16.500C8 14.500 20 15 24.500 17C25 19.500 23 21.500 20.500 21.500H6C3.500 21.500 2.500 19 3.500 16.500Z" fill="#ccd8f3"/><path d="M14.500 17.500L20.500 21.500V27L17 29.500L14.500 27Z" fill="#1b7dff"/><circle cx="20" cy="10" r="8" fill="#f2879a"/></svg>
<span id="t100" style="font-size:12px;line-height:14px;color:#2a1518;top:1387.00px;white-space:pre;left:26px;transform:translateX(-50%);">1</span>
<span id="t101" style="font-size:12px;line-height:16px;color:#f2f2f2;top:1386.50px;white-space:pre;letter-spacing:-0.047px;left:38px;">7°C</span>
<span id="t102" style="font-size:12px;line-height:16px;color:#e6e6e6;top:1403.00px;white-space:pre;letter-spacing:0.163px;left:38px;">Light rain</span>
<div style="left:1012.7px;top:1391.7px;width:11.3px;height:11.3px;background:linear-gradient(135deg,#5fd0ff,#18a0f2);border-radius:1px;"></div>
<div style="left:1025.0px;top:1391.7px;width:11.3px;height:11.3px;background:linear-gradient(135deg,#5fd0ff,#18a0f2);border-radius:1px;"></div>
<div style="left:1012.7px;top:1404.0px;width:11.3px;height:11.3px;background:linear-gradient(135deg,#5fd0ff,#18a0f2);border-radius:1px;"></div>
<div style="left:1025.0px;top:1404.0px;width:11.3px;height:11.3px;background:linear-gradient(135deg,#5fd0ff,#18a0f2);border-radius:1px;"></div>
<div style="left:1049px;top:1387px;width:220px;height:32px;background:#43353a;border-radius:16px;border:1px solid #55474b;box-sizing:border-box;"></div>
<svg style="left:1059px;top:1393px" width="20" height="20" viewBox="0 0 20 20" fill="none" stroke="#d7dcff" stroke-width="1.400"><circle cx="7.500" cy="8" r="5"/><path d="M11 11.800L15.500 16.500"/><path d="M13.500 2.500L14.300 4.700L16.500 5.500L14.300 6.300L13.500 8.500L12.700 6.300L10.500 5.500L12.700 4.700Z" fill="#d7dcff" stroke="none"/></svg>
<span id="t103" style="font-size:14px;line-height:18px;color:#e4e4e4;top:1394.00px;white-space:pre;letter-spacing:-0.643px;left:1086px;">Search</span>
<svg style="left:1217px;top:1389px" width="48" height="30" viewBox="0 0 48 30"><path d="M8 12C8 5 16 2 24 4C32 5 38 9 42 15C46 16 46 21 42 22C38 23 36 19 33 19C28 20 22 19 18 17C14 19 10 18 8 12Z" fill="#9a9aa3"/><path d="M12 8C16 4 24 4 28 7C22 7 16 8 12 12Z" fill="#b8b8c0"/><path d="M4 14L6 26L9 26L8 12ZM2 20L5 28L7 28Z" fill="#9dc43a"/></svg>
<div style="left:1281px;top:1398px;width:18px;height:17px;background:#6e6e6e;border-radius:2px;"></div>
<div style="left:1287px;top:1392px;width:18px;height:17px;background:linear-gradient(135deg,#f5f5f5,#cfcfcf);border-radius:2px;"></div>
<svg style="left:1324px;top:1391px" width="26" height="26" viewBox="0 0 26 26"><path d="M18.500 1.200L25 4V22L18.500 24.800L6 13.800L2.800 16.300L1 15.300V10.700L2.800 9.700L6 12.200Z" fill="#1f9cf0"/><path d="M18.500 1.200L25 4V22L18.500 24.800Z" fill="#0f6fc2"/><path d="M18.500 7.800V18.200L11.800 13Z" fill="#2a1c20"/><path d="M1 10.700L2.800 9.700L18.500 24.800L14 24.800Z" fill="#0a79d0" opacity=".0"/></svg>
<div style="left:1449px;top:1383px;width:40px;height:40px;background:rgba(255,255,255,0.07);border-radius:5px;"></div>
<svg style="left:1368.7px;top:1391.6px" width="24" height="24" viewBox="-12 -12 24 24"><circle r="12" fill="#fbc116"/><path d="M0 0L-10.390 -6A12 12 0 0 1 10.390 -6Z" fill="#e33b2e"/><path d="M0 0L-10.390 -6A12 12 0 0 0 0 12L5.200 3Z" fill="#2ba24c"/><path d="M0 -6H10.390A12 12 0 0 0 -10.390 -6Z" fill="#e33b2e"/><circle r="5.600" fill="#fff"/><circle r="4.400" fill="#4285f4"/></svg>
<svg style="left:1412.7px;top:1391.6px" width="24" height="24" viewBox="-12 -12 24 24"><circle r="12" fill="#fbc116"/><path d="M0 0L-10.390 -6A12 12 0 0 1 10.390 -6Z" fill="#e33b2e"/><path d="M0 0L-10.390 -6A12 12 0 0 0 0 12L5.200 3Z" fill="#2ba24c"/><path d="M0 -6H10.390A12 12 0 0 0 -10.390 -6Z" fill="#e33b2e"/><circle r="5.600" fill="#fff"/><circle r="4.400" fill="#4285f4"/></svg>
<svg style="left:1456.9px;top:1391.6px" width="24" height="24" viewBox="-12 -12 24 24"><circle r="12" fill="#fbc116"/><path d="M0 0L-10.390 -6A12 12 0 0 1 10.390 -6Z" fill="#e33b2e"/><path d="M0 0L-10.390 -6A12 12 0 0 0 0 12L5.200 3Z" fill="#2ba24c"/><path d="M0 -6H10.390A12 12 0 0 0 -10.390 -6Z" fill="#e33b2e"/><circle r="5.600" fill="#fff"/><circle r="4.400" fill="#4285f4"/></svg>
<svg style="left:1501px;top:1391.6px" width="24" height="24" viewBox="-12 -12 24 24"><circle r="12" fill="#fbc116"/><path d="M0 0L-10.390 -6A12 12 0 0 1 10.390 -6Z" fill="#e33b2e"/><path d="M0 0L-10.390 -6A12 12 0 0 0 0 12L5.200 3Z" fill="#2ba24c"/><path d="M0 -6H10.390A12 12 0 0 0 -10.390 -6Z" fill="#e33b2e"/><circle r="5.600" fill="#fff"/><circle r="4.400" fill="#4285f4"/></svg>
<svg style="left:1380px;top:1387px" width="16" height="16" viewBox="0 0 16 16"><circle cx="8" cy="8" r="8" fill="#3b3b3f"/></svg>
<svg style="left:1424px;top:1385px" width="16" height="16" viewBox="0 0 16 16"><circle cx="8" cy="8" r="8" fill="#d8341e"/><path d="M6.500 3.500V12M9.800 3V11.500" stroke="#8a2a12" stroke-width="1.600"/></svg>
<svg style="left:1468px;top:1386px" width="16" height="16" viewBox="0 0 16 16"><circle cx="8" cy="8" r="8" fill="#0b4ea2"/></svg>
<span id="t104" style="font-size:9px;line-height:12px;color:#fff;top:1388.00px;white-space:pre;left:1476px;transform:translateX(-50%);">L</span>
<div style="left:1334.0px;top:1419px;width:6px;height:3px;background:#8a8a8a;border-radius:1.5px;"></div>
<div style="left:1377.7px;top:1419px;width:6px;height:3px;background:#8a8a8a;border-radius:1.5px;"></div>
<div style="left:1421.7px;top:1419px;width:6px;height:3px;background:#8a8a8a;border-radius:1.5px;"></div>
<div style="left:1460.9px;top:1419px;width:16px;height:3px;background:#f28b73;border-radius:1.5px;"></div>
<div style="left:1510.0px;top:1419px;width:6px;height:3px;background:#8a8a8a;border-radius:1.5px;"></div>
<span id="t105" style="font-size:12px;line-height:16px;color:#f2f2f2;top:1386.50px;white-space:pre;right:4px;">12:25</span>
<span id="t106" style="font-size:12px;line-height:16px;color:#f2f2f2;top:1403.00px;white-space:pre;right:4px;">25/03/2026</span>
</div></body></html>
